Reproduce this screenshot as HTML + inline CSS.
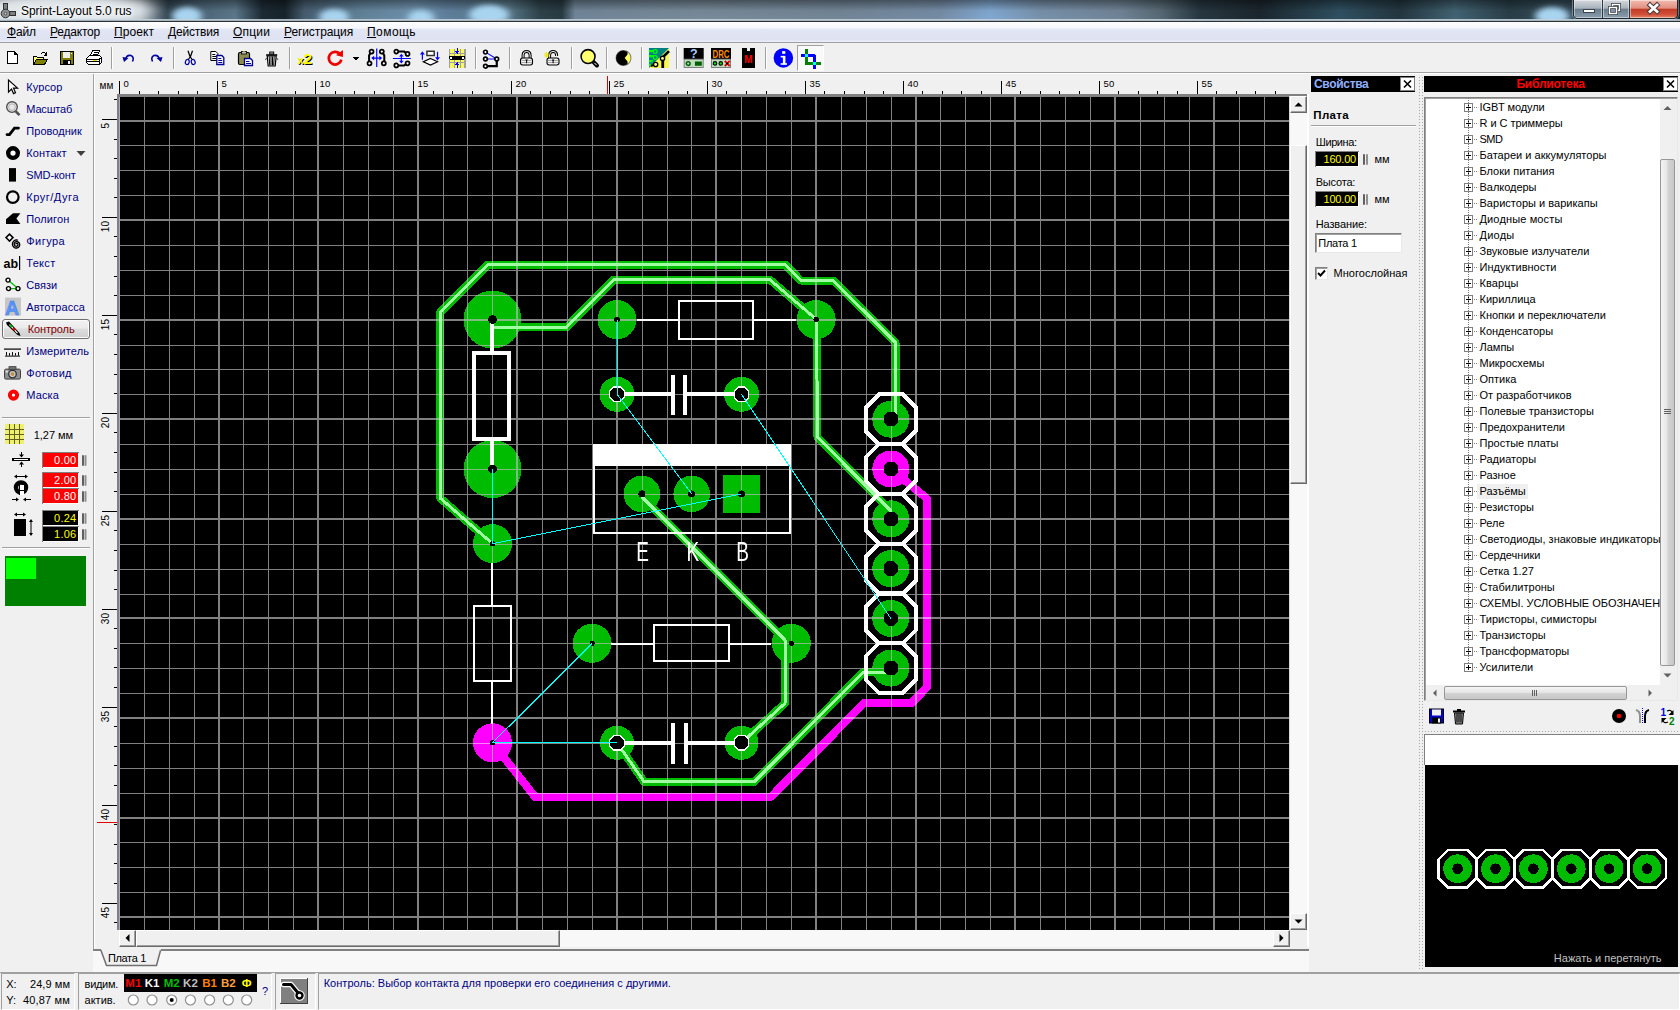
<!DOCTYPE html>
<html lang="ru"><head><meta charset="utf-8"><title>Sprint-Layout 5.0 rus</title>
<style>

html,body{margin:0;padding:0;background:#f0f0f0;}
body{width:1680px;height:1010px;overflow:hidden;font-family:"Liberation Sans",sans-serif;font-size:11px;}
#app{position:relative;width:1680px;height:1010px;overflow:hidden;background:#f0f0f0;}
.t{position:absolute;white-space:nowrap;line-height:1;}
.a{position:absolute;}
svg{position:absolute;overflow:visible;}
svg text{font-family:"Liberation Sans",sans-serif;}
u{text-decoration:underline;}

</style></head>
<body>
<div id="app">
<svg class="a" style="left:0;top:0" width="1680" height="22" viewBox="0 0 1680 22">
<defs>
<linearGradient id="tbh" x1="0" x2="1" y1="0" y2="0"><stop offset="0.0000" stop-color="#bcc6cc"/><stop offset="0.0446" stop-color="#c6cfd4"/><stop offset="0.0833" stop-color="#b4bec6"/><stop offset="0.0940" stop-color="#5c6c78"/><stop offset="0.1000" stop-color="#324550"/><stop offset="0.1190" stop-color="#4c6679"/><stop offset="0.1399" stop-color="#5d798c"/><stop offset="0.1560" stop-color="#1d2b35"/><stop offset="0.1696" stop-color="#18242b"/><stop offset="0.1815" stop-color="#485f72"/><stop offset="0.2143" stop-color="#62839a"/><stop offset="0.2470" stop-color="#7093af"/><stop offset="0.2679" stop-color="#5f809d"/><stop offset="0.3036" stop-color="#587787"/><stop offset="0.3214" stop-color="#2e434c"/><stop offset="0.3345" stop-color="#293c43"/><stop offset="0.3423" stop-color="#72879a"/><stop offset="0.4167" stop-color="#798c9b"/><stop offset="0.5000" stop-color="#748798"/><stop offset="0.5595" stop-color="#778ea8"/><stop offset="0.5893" stop-color="#83abd5"/><stop offset="0.6190" stop-color="#7993ad"/><stop offset="0.6667" stop-color="#728598"/><stop offset="0.6905" stop-color="#586b76"/><stop offset="0.7143" stop-color="#273741"/><stop offset="0.7500" stop-color="#1b272e"/><stop offset="0.7976" stop-color="#305162"/><stop offset="0.8333" stop-color="#243741"/><stop offset="0.8661" stop-color="#436474"/><stop offset="0.8988" stop-color="#293e48"/><stop offset="0.9286" stop-color="#374f5d"/><stop offset="1.0000" stop-color="#1c2a32"/></linearGradient>
<linearGradient id="tbv" x1="0" x2="0" y1="0" y2="1">
<stop offset="0" stop-color="#000" stop-opacity="0.42"/><stop offset="0.25" stop-color="#000" stop-opacity="0.24"/><stop offset="0.5" stop-color="#000" stop-opacity="0.05"/><stop offset="1" stop-color="#000" stop-opacity="0"/>
</linearGradient>
<filter id="bl" x="-50%" y="-100%" width="200%" height="300%"><feGaussianBlur stdDeviation="3.5 2.5"/></filter>
<filter id="bl2" x="-20%" y="-100%" width="140%" height="300%"><feGaussianBlur stdDeviation="9 4"/></filter>
</defs>
<rect x="0" y="0" width="1680" height="21" fill="url(#tbh)"/>
<rect x="0" y="0" width="1680" height="21" fill="url(#tbv)"/>
<g filter="url(#bl)" fill="#a8d4f0">
<ellipse cx="187" cy="16" rx="15" ry="9"/><ellipse cx="334" cy="17" rx="15" ry="8"/><ellipse cx="421" cy="18" rx="13" ry="8"/>
<ellipse cx="489" cy="15" rx="20" ry="10"/><ellipse cx="1552" cy="16" rx="17" ry="9"/>
</g>
<g filter="url(#bl2)"><ellipse cx="62" cy="10" rx="88" ry="16" fill="#e4eaee" opacity="0.95"/></g>
<rect x="0" y="19" width="1680" height="1" fill="#c8d4dc" opacity="0.85"/>
<rect x="0" y="20" width="1680" height="1" fill="#a4b2bc"/>
<rect x="0" y="21" width="1680" height="1" fill="#2c3238"/>
<!-- app icon -->
<g shape-rendering="crispEdges"><rect x="3.5" y="3.5" width="4" height="8" fill="#808080" stroke="#303030" stroke-width="1"/><rect x="9.5" y="11.5" width="6" height="4" fill="#808080" stroke="#303030" stroke-width="1"/></g>
<circle cx="5.5" cy="13.5" r="4.3" fill="#909090" stroke="#303030" stroke-width="1"/><circle cx="5.5" cy="13.5" r="1.3" fill="#d0d0d0" stroke="#404040" stroke-width=".8"/>
</svg>
<span class="t " style="left:21.0px;top:4.8px;font-size:12px;color:#000;letter-spacing:-0.04px;text-shadow:0 0 6px #fff,0 0 6px #fff,0 0 3px #fff;">Sprint-Layout 5.0 rus</span>
<div class="a" style="left:1573px;top:0;width:105px;height:19px;border:1px solid #1c2830;border-top:none;border-radius:0 0 5px 5px;box-sizing:border-box;overflow:hidden;box-shadow:0 0 0 1px rgba(255,255,255,.35)">
<div class="a" style="left:0;top:0;width:28px;height:18px;background:linear-gradient(#d4d8dc 0,#a8b2bc 45%,#6a7e8e 52%,#8c9eae 100%);border-right:1px solid #2c3840;box-shadow:inset 0 0 0 1px rgba(255,255,255,.45)"></div>
<div class="a" style="left:29px;top:0;width:26px;height:18px;background:linear-gradient(#d4d8dc 0,#a8b2bc 45%,#6a7e8e 52%,#8c9eae 100%);border-right:1px solid #2c3840;box-shadow:inset 0 0 0 1px rgba(255,255,255,.45)"></div>
<div class="a" style="left:56px;top:0;width:48px;height:18px;background:linear-gradient(#f2bcb0 0,#e29080 45%,#c23c28 52%,#d05038 80%,#e48468 100%);box-shadow:inset 0 0 0 1px rgba(255,255,255,.45)"></div>
<svg style="left:0;top:0" width="103" height="18" viewBox="0 0 103 18">
<rect x="9.500" y="9.500" width="11" height="3" fill="#fff" stroke="#3a444c"/>
<rect x="38.500" y="4.500" width="7" height="6" fill="none" stroke="#3a444c" stroke-width="3"/><rect x="38.500" y="4.500" width="7" height="6" fill="none" stroke="#fff" stroke-width="1.400"/>
<rect x="35.500" y="7.500" width="7" height="6" fill="#8294a4" stroke="#3a444c" stroke-width="3"/><rect x="35.500" y="7.500" width="7" height="6" fill="none" stroke="#fff" stroke-width="1.400"/>
<path d="M76 5 L83 11.500 M83 5 L76 11.500" stroke="#4a3a3c" stroke-width="4.800" stroke-linecap="square"/><path d="M76 5 L83 11.500 M83 5 L76 11.500" stroke="#fff" stroke-width="2.800" stroke-linecap="square"/>
</svg></div>
<div class="a" style="left:0;top:22px;width:1680px;height:20px;background:linear-gradient(#fdfdff 0,#f6f7fc 30%,#e3e6f4 36%,#dde1f1 85%,#eceef8 100%);"></div>
<div class="a" style="left:0;top:42px;width:1680px;height:1px;background:#a0a0a0"></div>
<span class="t " style="left:7.0px;top:26.0px;font-size:12px;color:#000;letter-spacing:-0.20px;"><u>Ф</u>айл</span>
<span class="t " style="left:50.0px;top:26.0px;font-size:12px;color:#000;letter-spacing:-0.21px;"><u>Р</u>едактор</span>
<span class="t " style="left:114.0px;top:26.0px;font-size:12px;color:#000;letter-spacing:0.08px;"><u>П</u>роект</span>
<span class="t " style="left:168.0px;top:26.0px;font-size:12px;color:#000;letter-spacing:-0.20px;"><u>Д</u>ействия</span>
<span class="t " style="left:233.0px;top:26.0px;font-size:12px;color:#000;letter-spacing:0.18px;"><u>О</u>пции</span>
<span class="t " style="left:284.0px;top:26.0px;font-size:12px;color:#000;letter-spacing:-0.10px;"><u>Р</u>егистрация</span>
<span class="t " style="left:367.0px;top:26.0px;font-size:12px;color:#000;letter-spacing:0.44px;"><u>П</u>омощь</span>
<div class="a" style="left:0;top:72px;width:1680px;height:1px;background:#a0a0a0"></div>
<div class="a" style="left:0;top:73px;width:1680px;height:1px;background:#fff"></div>
<div class="a" style="left:111px;top:47px;width:1px;height:22px;background:#a0a0a0"></div><div class="a" style="left:112px;top:47px;width:1px;height:22px;background:#fff"></div>
<div class="a" style="left:173px;top:47px;width:1px;height:22px;background:#a0a0a0"></div><div class="a" style="left:174px;top:47px;width:1px;height:22px;background:#fff"></div>
<div class="a" style="left:289px;top:47px;width:1px;height:22px;background:#a0a0a0"></div><div class="a" style="left:290px;top:47px;width:1px;height:22px;background:#fff"></div>
<div class="a" style="left:475px;top:47px;width:1px;height:22px;background:#a0a0a0"></div><div class="a" style="left:476px;top:47px;width:1px;height:22px;background:#fff"></div>
<div class="a" style="left:509px;top:47px;width:1px;height:22px;background:#a0a0a0"></div><div class="a" style="left:510px;top:47px;width:1px;height:22px;background:#fff"></div>
<div class="a" style="left:571px;top:47px;width:1px;height:22px;background:#a0a0a0"></div><div class="a" style="left:572px;top:47px;width:1px;height:22px;background:#fff"></div>
<div class="a" style="left:606px;top:47px;width:1px;height:22px;background:#a0a0a0"></div><div class="a" style="left:607px;top:47px;width:1px;height:22px;background:#fff"></div>
<div class="a" style="left:641px;top:47px;width:1px;height:22px;background:#a0a0a0"></div><div class="a" style="left:642px;top:47px;width:1px;height:22px;background:#fff"></div>
<div class="a" style="left:676px;top:47px;width:1px;height:22px;background:#a0a0a0"></div><div class="a" style="left:677px;top:47px;width:1px;height:22px;background:#fff"></div>
<div class="a" style="left:765px;top:47px;width:1px;height:22px;background:#a0a0a0"></div><div class="a" style="left:766px;top:47px;width:1px;height:22px;background:#fff"></div>
<div class="a" style="left:797px;top:45px;width:27px;height:26px;background:#f9f9f9;border:1px solid #a0a0a0;border-right-color:#fff;border-bottom-color:#fff;box-sizing:border-box"></div>
<svg class="a" style="left:0;top:0" width="840" height="74" viewBox="0 0 840 74" shape-rendering="crispEdges"><g transform="translate(4.5,50.0) scale(1.0)"><path d="M2.500 1.500 H9.500 L12.500 4.500 V13.500 H2.500 Z" fill="#fff" stroke="#000"/><path d="M9.500 1.500 V4.500 H12.500" fill="none" stroke="#000"/></g><g transform="translate(32.0,50.0) scale(1.0)"><path d="M1.500 14.500 V6.500 H4.500 L5.500 7.500 H11.500 V9.500" fill="#ffff80" stroke="#000"/><path d="M1.500 14.500 L4.500 9.500 H15.500 L12.500 14.500 Z" fill="#808000" stroke="#000"/><path d="M9 3.500 Q12 1 14 4.500 M14.500 2 V5 H11.500" fill="none" stroke="#000"/></g><g transform="translate(59.0,50.0) scale(1.0)"><rect x="1.500" y="1.500" width="13" height="13" fill="#808000" stroke="#000"/><rect x="4" y="2" width="7" height="6" fill="#f0f0f0"/><rect x="4" y="10" width="8" height="4" fill="#000"/><rect x="9" y="11" width="2" height="3" fill="#f0f0f0"/><rect x="12" y="3" width="1" height="1" fill="#fff"/></g><g transform="translate(86.0,50.0) scale(1.0)"><path d="M4.500 5.500 L6.500 0.500 H13.500 L11.500 5.500 Z" fill="#fff" stroke="#000"/><path d="M7.500 2.500 H11.500 M6.500 4 H10.500" stroke="#000"/><path d="M0.500 8.500 L3.500 5.500 H13.500 L15.500 7.500 V12.500 L13.500 14.500 H2.500 L0.500 12.500 Z" fill="#fff" stroke="#000"/><path d="M0.500 9.500 H13 L15.500 7.500 M13.500 9.500 V14.500 M0.500 11.500 H13.500" fill="none" stroke="#000"/><rect x="7" y="10" width="4" height="1" fill="#e8e000"/></g><g transform="translate(121.0,50.0) scale(1.0)" shape-rendering="geometricPrecision"><path d="M4.500 9 Q6 4.500 10 5.500 Q13.500 7 11.500 11.500" fill="none" stroke="#0000a0" stroke-width="1.600"/><path d="M1.500 7 L7.500 8 L3 12 Z" fill="#0000a0"/></g><g transform="translate(148.0,50.0) scale(1.0)" shape-rendering="geometricPrecision"><path d="M11.500 9 Q10 4.500 6 5.500 Q2.500 7 4.500 11.500" fill="none" stroke="#0000a0" stroke-width="1.600"/><path d="M14.500 7 L8.500 8 L13 12 Z" fill="#0000a0"/></g><g transform="translate(182.0,50.0) scale(1.0)" shape-rendering="geometricPrecision"><path d="M6 0.800 L8 6.500 L10.500 10 M10.500 0.800 L8.500 6.500 L6 10" stroke="#000" stroke-width="1.250" fill="none"/><ellipse cx="5.300" cy="12" rx="1.900" ry="2.600" fill="none" stroke="#0000a0" stroke-width="1.200" transform="rotate(15 5.300 12)"/><ellipse cx="11.200" cy="12" rx="1.900" ry="2.600" fill="none" stroke="#0000a0" stroke-width="1.200" transform="rotate(-15 11.200 12)"/></g><g transform="translate(209.3,50.0) scale(1.0)" shape-rendering="geometricPrecision"><path d="M1.500 1.500 H6.500 L8.500 3.500 V10.500 H1.500 Z" fill="#fff" stroke="#000"/><path d="M3 4.500 H6 M3 6.500 H7 M3 8.500 H7" stroke="#000"/><path d="M7.500 5.500 H12.500 L14.500 7.500 V14.500 H7.500 Z" fill="#fff" stroke="#000090" stroke-width="1.300"/><path d="M9 8.500 H12 M9 10.500 H13 M9 12.500 H13" stroke="#000090"/></g><g transform="translate(237.0,50.0) scale(1.0)" shape-rendering="geometricPrecision"><rect x="1.500" y="2.500" width="11" height="12" rx="1.500" fill="#8c8c4c" stroke="#000" stroke-width="1.200"/><rect x="4.500" y="1.500" width="5" height="2.500" fill="#c0c0c0" stroke="#000" stroke-width=".8"/><path d="M6 2 L7 1 L8 2 Z" fill="#ffff00"/><path d="M7.500 8.500 H13.500 L15.500 10.500 V15.500 H7.500 Z" fill="#fff" stroke="#000090" stroke-width="1.300"/><path d="M9 11.500 H12.500 M9 13.500 H14" stroke="#000090"/></g><g transform="translate(263.7,50.5) scale(1.0)" shape-rendering="geometricPrecision"><path d="M3.500 5.500 H12.500 L11.500 15.500 H4.500 Z" fill="#fff" stroke="#000" stroke-width="1.200"/><path d="M2.500 4.500 H13.500" stroke="#000" stroke-width="1.600"/><rect x="6" y="1.500" width="4" height="2" fill="#c0c0c0" stroke="#000" stroke-width=".9"/><path d="M5.500 6 L6 15 M7.300 6 V15 M8.800 6 V15 M10.500 6 L10 15" stroke="#000" stroke-width="1"/><path d="M1.500 9 L3 8 M14.500 9 L13 8" stroke="#000" stroke-width=".9"/></g><g shape-rendering="geometricPrecision"><text x="298.500" y="64.500" font-size="11" font-weight="bold" fill="#000">x<tspan font-size="15">2</tspan></text><text x="297.500" y="63.500" font-size="11" font-weight="bold" fill="#ffff00">x<tspan font-size="15">2</tspan></text></g><g transform="translate(326.5,49.5) scale(1.06)" shape-rendering="geometricPrecision"><path d="M12.500 4 A6 6 0 1 0 14 9.500" fill="none" stroke="#ee0000" stroke-width="2.600"/><path d="M9 5.500 L15.500 0.500 L15.500 7 Z" fill="#ee0000"/></g><path d="M352 56.500 H360 L356 60.500 Z" fill="#000"/><g transform="translate(367.3,48.6) scale(1.18)" shape-rendering="geometricPrecision"><path d="M3.600 2.500 L1.500 5.700 V10.200 L1.900 12.300 M12.300 2.500 L14.400 5.700 V10.200 L14 12.300" fill="none" stroke="#000" stroke-width="1.700"/><circle cx="3.600" cy="2.500" r="1.700" fill="#fff" stroke="#000" stroke-width="1.500"/><circle cx="12.300" cy="2.500" r="1.700" fill="#fff" stroke="#000" stroke-width="1.500"/><circle cx="1.900" cy="12.500" r="1.700" fill="#fff" stroke="#000" stroke-width="1.500"/><circle cx="14" cy="12.500" r="1.700" fill="#fff" stroke="#000" stroke-width="1.500"/><path d="M8 0 V15.500 M4.500 8 H11.500" stroke="#0000ff" stroke-width="1"/><path d="M3.400 8 l2.400-2 v4z M12.600 8 l-2.400-2 v4z" fill="#0000ff"/></g><g transform="translate(394.1,49.3) scale(1.15)" shape-rendering="geometricPrecision"><path d="M1.900 2 H8.800 L11.500 4 M1.900 14 H8.800 L11.500 12.300" fill="none" stroke="#000" stroke-width="1.700"/><circle cx="1.900" cy="2" r="1.700" fill="#fff" stroke="#000" stroke-width="1.500"/><circle cx="11.700" cy="4" r="1.700" fill="#fff" stroke="#000" stroke-width="1.500"/><circle cx="1.900" cy="14" r="1.700" fill="#fff" stroke="#000" stroke-width="1.500"/><circle cx="11.700" cy="12.200" r="1.700" fill="#fff" stroke="#000" stroke-width="1.500"/><path d="M-1 8 H14.500 M6.300 5 V11" stroke="#0000ff" stroke-width="1"/><path d="M6.300 3.800 l-2 2.400 h4z M6.300 12.400 l-2-2.400 h4z" fill="#0000ff"/></g><g transform="translate(420.2,48.2) scale(1.22)" shape-rendering="geometricPrecision"><rect x="5.500" y="2.500" width="6" height="3.500" fill="#fff" stroke="#303030" stroke-width="1.200"/><path d="M8.400 8.400 L14.200 11.100 L8.400 13.800 L2.600 11.100 Z" fill="#fff" stroke="#000" stroke-width="1"/><path d="M1.800 4 V9.500 M14.200 3 V8.500" stroke="#0000ff" stroke-width="1"/><path d="M1.800 2.600 l-2 2.600 h4z M14.200 10 l-2-2.600 h4z" fill="#0000ff"/></g><g transform="translate(448.7,48.5) scale(1.12)"><rect x="0" y="0" width="15" height="17" fill="#f8f860"/><path d="M0.500 0 V17 M5.500 0 V17 M10.500 0 V17 M14.500 0 V17 M0 4.500 H15 M0 12.500 H15" stroke="#a0a0a0" stroke-width="1"/><rect x="0" y="6.500" width="15" height="3.600" rx="1.800" fill="#000"/><circle cx="2" cy="8.300" r="1" fill="#fff"/><circle cx="13" cy="8.300" r="1" fill="#fff"/><path d="M7.500 -0.500 V3 M7.500 17.500 V14" stroke="#0000ff" stroke-width="1"/><path d="M7.500 5 l-2-2.400 h4z M7.500 12 l-2 2.400 h4z" fill="#0000ff"/></g><g transform="translate(482.9,49.7) scale(1.1)" shape-rendering="geometricPrecision"><path d="M2.300 2.200 L12.600 8.500 H2.300" fill="none" stroke="#0000ff" stroke-width="1"/><path d="M2.300 15 H12.600 V8.500" fill="none" stroke="#000" stroke-width="2"/><circle cx="2.300" cy="2.200" r="1.700" fill="#fff" stroke="#000" stroke-width="1.500"/><circle cx="2.300" cy="8.500" r="1.700" fill="#fff" stroke="#000" stroke-width="1.500"/><circle cx="2.300" cy="15" r="1.700" fill="#fff" stroke="#000" stroke-width="1.500"/><circle cx="12.600" cy="8.500" r="1.700" fill="#fff" stroke="#000" stroke-width="1.500"/></g><g transform="translate(518.5,50.0) scale(1.0)" shape-rendering="geometricPrecision"><path d="M4.600 8 V4.900 A3.500 3.500 0 0 1 11.600 4.900 V8" fill="none" stroke="#000" stroke-width="3"/><path d="M4.600 8 V4.900 A3.500 3.500 0 0 1 11.600 4.900 V8" fill="none" stroke="#f8f8f8" stroke-width="1"/><rect x="2" y="8" width="12" height="7" rx="2.200" fill="#f0f0f0" stroke="#000" stroke-width="1.100"/><path d="M3 10.500 H13 M3 12.500 H13" stroke="#a8a8a8" stroke-width="1"/><path d="M6.800 9.500 H9.400 L8.600 11 V13.200 H7.600 V11 Z" fill="#000"/></g><g transform="translate(545.0,50.0) scale(1.0)" shape-rendering="geometricPrecision"><path d="M4.600 8 V4.900 A3.500 3.500 0 0 1 11.600 4.900 V6" fill="none" stroke="#000" stroke-width="3"/><path d="M4.600 8 V4.900 A3.500 3.500 0 0 1 11.600 4.900 V6" fill="none" stroke="#f8f8f8" stroke-width="1"/><rect x="2" y="8" width="12" height="7" rx="2.200" fill="#f0f0f0" stroke="#000" stroke-width="1.100"/><path d="M3 10.500 H13 M3 12.500 H13" stroke="#a8a8a8" stroke-width="1"/><path d="M6.800 9.500 H9.400 L8.600 11 V13.200 H7.600 V11 Z" fill="#000"/><path d="M-1 5 H4 M1.500 2 V8 M-0.500 2.800 L3.500 7.200 M3.500 2.800 L-0.500 7.200" stroke="#f0e800" stroke-width="1"/></g><g transform="translate(579.9,48.4) scale(1.2)" shape-rendering="geometricPrecision"><path d="M10.800 10.800 L14.200 14.200" stroke="#000" stroke-width="3.400" stroke-linecap="round"/><path d="M12 12 L14 14" stroke="#fff" stroke-width=".8"/><circle cx="6.800" cy="6.800" r="5.800" fill="#ffff70" stroke="#000" stroke-width="1.300"/></g><g transform="translate(614.3,48.8) scale(1.15)" shape-rendering="geometricPrecision"><circle cx="8" cy="8" r="6.500" fill="#ffff60" stroke="#808080" stroke-width=".9"/><path d="M8 1.500 A6.500 6.500 0 1 0 8 14.500 L11.500 13.500 L11.500 11 L9 8 L11.500 5 L11.500 2.500 Z" fill="#000"/></g><g transform="translate(649.0,48.0) scale(1.25)" shape-rendering="geometricPrecision"><rect x="0" y="0" width="16" height="16" fill="#f8f850"/><path d="M0 0 H16 L0 16 Z" fill="#008080"/><path d="M0 2.500 H4.500 M0 6.500 H4.500 M0 10.500 H3 M0 13.500 H1.500" stroke="#00ff00" stroke-width="1.700"/><circle cx="5" cy="2.800" r="1.500" fill="#008080" stroke="#00ff00" stroke-width="1"/><circle cx="5" cy="7.500" r="1.500" fill="#008080" stroke="#00ff00" stroke-width="1"/><path d="M16 2.500 L11 7.500 V16" fill="none" stroke="#000" stroke-width="2.200"/><circle cx="10.800" cy="8.300" r="1.700" fill="#ffff80" stroke="#000" stroke-width="1.100"/><path d="M1.500 14.500 L5 13" stroke="#000" stroke-width="1.600"/><circle cx="5.300" cy="13.200" r="1.700" fill="#ffff80" stroke="#000" stroke-width="1.100"/></g><g transform="translate(683.7,48.0) scale(1.25)" shape-rendering="geometricPrecision"><rect x="0" y="0" width="16" height="9" fill="#000"/><rect x="0.400" y="9" width="15.200" height="6.600" fill="#c0dcc0" stroke="#808080" stroke-width=".8"/><circle cx="3.600" cy="12.400" r="1.500" fill="#c0dcc0" stroke="#006000" stroke-width="1.200"/><rect x="9" y="10.800" width="5.500" height="3.400" fill="#006000"/></g><text x="690" y="58" font-size="12.500" font-weight="bold" fill="#a8ccff" shape-rendering="geometricPrecision">?</text><g transform="translate(711.0,48.0) scale(1.25)" shape-rendering="geometricPrecision"><rect x="0" y="0" width="16" height="9" fill="#000"/><rect x="0.400" y="9" width="15.200" height="6.600" fill="#c0dcc0" stroke="#808080" stroke-width=".8"/><circle cx="3.200" cy="12.300" r="1.400" fill="#00e000" stroke="#000" stroke-width=".9"/><circle cx="7.800" cy="12.300" r="1.400" fill="#00e000" stroke="#000" stroke-width=".9"/><path d="M11 10.300 L15 14.500 M15 10.300 L11 14.500" stroke="#e00000" stroke-width="1.500"/><circle cx="13" cy="12.400" r=".900" fill="#000"/></g><text x="712.500" y="57.500" font-size="10" font-weight="bold" fill="#ff9000" textLength="17" lengthAdjust="spacingAndGlyphs" shape-rendering="geometricPrecision">DRC</text><path d="M742 48 H747 V50.500 H750 V48 H755 V67.500 H742 Z" fill="#000"/><text x="744.300" y="62.500" font-size="10" font-weight="bold" fill="#ff0000" shape-rendering="geometricPrecision">M</text><g transform="translate(773.6,48.2) scale(1.22)" shape-rendering="geometricPrecision"><circle cx="8" cy="8" r="8" fill="#0000ff"/><rect x="7.600" y="6.300" width="2.100" height="7" fill="#fff"/><rect x="5.800" y="6.300" width="3" height="1.300" fill="#fff"/><rect x="5.800" y="12.300" width="5.200" height="1.300" fill="#fff"/><rect x="7" y="2.400" width="2.600" height="2.200" fill="#fff"/></g><rect x="805" y="49" width="3" height="16" fill="#008000"/><rect x="805" y="62" width="16" height="3" fill="#008000"/><rect x="801" y="54" width="14" height="3" fill="#0000ff"/><rect x="813" y="55" width="3" height="14" fill="#0000ff"/><rect x="805" y="54" width="3" height="3" fill="#00ffff"/><rect x="813" y="62" width="3" height="3" fill="#00ffff"/></svg>
<div class="a" style="left:2px;top:319px;width:88px;height:20px;border:1px solid #707070;border-radius:3px;box-sizing:border-box;background:linear-gradient(#f2f2f2 0,#ebebeb 45%,#dddddd 50%,#cfcfcf 100%);box-shadow:inset 0 0 0 1px #fcfcfc"></div>
<span class="t " style="left:26.3px;top:81.7px;font-size:11px;color:#000080;letter-spacing:0.06px;">Курсор</span>
<span class="t " style="left:26.3px;top:103.7px;font-size:11px;color:#000080;letter-spacing:-0.18px;">Масштаб</span>
<span class="t " style="left:26.3px;top:125.7px;font-size:11px;color:#000080;letter-spacing:0.03px;">Проводник</span>
<span class="t " style="left:26.3px;top:147.7px;font-size:11px;color:#000080;letter-spacing:0.10px;">Контакт</span>
<span class="t " style="left:26.3px;top:169.7px;font-size:11px;color:#000080;letter-spacing:-0.12px;">SMD-конт</span>
<span class="t " style="left:26.3px;top:191.7px;font-size:11px;color:#000080;letter-spacing:0.52px;">Круг/Дуга</span>
<span class="t " style="left:26.3px;top:213.7px;font-size:11px;color:#000080;letter-spacing:0.10px;">Полигон</span>
<span class="t " style="left:26.3px;top:235.7px;font-size:11px;color:#000080;letter-spacing:0.46px;">Фигура</span>
<span class="t " style="left:26.3px;top:257.7px;font-size:11px;color:#000080;letter-spacing:0.30px;">Текст</span>
<span class="t " style="left:26.3px;top:279.7px;font-size:11px;color:#000080;letter-spacing:0.02px;">Связи</span>
<span class="t " style="left:26.3px;top:301.7px;font-size:11px;color:#000080;letter-spacing:0.06px;">Автотрасса</span>
<span class="t " style="left:27.7px;top:324.1px;font-size:11px;color:#800000;letter-spacing:-0.12px;">Контроль</span>
<span class="t " style="left:26.3px;top:345.7px;font-size:11px;color:#000080;letter-spacing:0.10px;">Измеритель</span>
<span class="t " style="left:26.3px;top:367.7px;font-size:11px;color:#000080;letter-spacing:0.26px;">Фотовид</span>
<span class="t " style="left:26.3px;top:389.7px;font-size:11px;color:#000080;letter-spacing:0.12px;">Маска</span>
<svg class="a" style="left:0;top:0" width="94" height="620" viewBox="0 0 94 620"><g transform="translate(4,78.6)"><path d="M4.500 1.500 V13.500 L7.500 10.500 L9.500 15 L11.500 14 L9.500 9.500 H13.500 Z" fill="#fff" stroke="#000" stroke-width="1.200"/></g><g transform="translate(4,100.6)"><path d="M11.500 10.500 L15.500 14.500" stroke="#505050" stroke-width="2.600"/><circle cx="8" cy="6.500" r="5.300" fill="#e8e8e8" stroke="#505050" stroke-width="1.400"/><circle cx="8" cy="6.500" r="3.300" fill="none" stroke="#b0b0b0" stroke-width="1"/></g><g transform="translate(4,122.6)"><path d="M3 12 H5.500 L10.500 5.500 H14.500" fill="none" stroke="#000" stroke-width="2.800" stroke-linecap="round"/></g><g transform="translate(4,144.6)"><circle cx="9" cy="8.500" r="4.800" fill="#fff" stroke="#000" stroke-width="4.400"/></g><g transform="translate(4,166.6)"><rect x="5" y="1.500" width="7" height="13.500" fill="#000"/></g><g transform="translate(4,188.6)"><circle cx="8.800" cy="8.500" r="5.800" fill="none" stroke="#000" stroke-width="2.200"/></g><g transform="translate(4,210.6)"><path d="M2 8.600 L9 2.600 H16.400 L12.400 7.800 L16.400 13.400 H2 Z" fill="#000"/></g><g transform="translate(5,232.6)"><path d="M4.500 1.500 L8 5 L4.500 8.500 L1 5 Z" fill="#fff" stroke="#000" stroke-width="1.500"/><path d="M10.90 11.80 L10.85 11.58 L10.88 11.33 L11.01 11.09 L11.23 10.88 L11.54 10.76 L11.90 10.74 L12.27 10.85 L12.60 11.09 L12.86 11.45 L12.99 11.90 L12.96 12.40 L12.76 12.89 L12.40 13.31 L11.90 13.60 L11.30 13.72 L10.66 13.64 L10.07 13.35 L9.57 12.86 L9.25 12.21 L9.15 11.47 L9.29 10.70 L9.69 10.00 L10.31 9.44 L11.10 9.10 L11.99 9.02 L12.88 9.24 L13.69 9.75 L14.30 10.50 L14.66 11.45 L14.70 12.48 L14.39 13.50 L13.77 14.39 L12.87 15.06 L11.78 15.41 L10.60 15.40 L9.46 15.01 L8.49 14.26 L7.78 13.21 L7.44 11.97 L7.51 10.65 L8.00 9.40 L8.88 8.35 L10.07 7.61 L11.47 7.29 L12.92 7.43" fill="none" stroke="#000" stroke-width="1.300"/></g><g transform="translate(5,276.6)"><path d="M3 3.500 L13 12 H3.500" fill="none" stroke="#00c000" stroke-width="1.300"/><circle cx="3" cy="3.500" r="2" fill="#fff" stroke="#000" stroke-width="1.400"/><circle cx="3.500" cy="12" r="2" fill="#fff" stroke="#000" stroke-width="1.400"/><circle cx="13" cy="12" r="2" fill="#fff" stroke="#000" stroke-width="1.400"/></g><g transform="translate(4,298.6)"><rect x="1" y="-1" width="16" height="18" fill="#c6c6c6"/></g><g transform="translate(5,320.6)"><path d="M1 2 L4 1 L14.500 12.500 L15.500 15.500 L12.500 14.500 L2 4.500 Z" fill="#000"/><path d="M4.500 4 L12.500 12.500" stroke="#fff" stroke-width="1.200"/><path d="M5 4.500 L7 6.500" stroke="#00c000" stroke-width="2"/><path d="M8 7.500 L10 9.800" stroke="#e00000" stroke-width="2"/></g><g transform="translate(4,342.6)"><path d="M0 6.500 H17" stroke="#000" stroke-width="1.200"/><path d="M2.500 13 V9.500 M5.500 13 V10.500 M8.500 13 V9.500 M11.500 13 V10.500 M14.500 13 V9.500 M1 13.500 H16" stroke="#000" stroke-width="1"/></g><g transform="translate(4,364.6)"><rect x="0.500" y="4.500" width="16" height="10" rx="1.500" fill="#909090" stroke="#404040"/><rect x="5" y="2" width="7" height="3" fill="#707070" stroke="#404040" stroke-width=".8"/><circle cx="8.500" cy="9.500" r="3.800" fill="#c8c8c8" stroke="#303030" stroke-width="1.300"/><circle cx="8.500" cy="9.500" r="1.800" fill="#c09040"/><rect x="1.500" y="6" width="2.500" height="2" fill="#d8d8d8"/></g><g transform="translate(5,386.6)"><circle cx="8.500" cy="8.500" r="3.600" fill="#fff" stroke="#ff0000" stroke-width="4"/></g><path d="M76.500 151 H85.500 L81 156 Z" fill="#404040"/><text x="3.500" y="267.500" font-size="12.500" font-weight="bold" fill="#000">ab</text><rect x="19" y="256" width="1.200" height="14" fill="#000"/><text x="5" y="314.500" font-size="19.500" font-weight="bold" fill="#5a98ff" stroke="#3a74e8" stroke-width=".5">A</text><rect x="2" y="417" width="88" height="1" fill="#a0a0a0"/><rect x="2" y="418" width="88" height="1" fill="#fff"/><rect x="2" y="547" width="88" height="1" fill="#a0a0a0"/><rect x="2" y="548" width="88" height="1" fill="#fff"/><g shape-rendering="crispEdges"><rect x="5" y="424" width="19" height="20" fill="#f0f070"/><path d="M9.500 424 V444 M14.500 424 V444 M19.500 424 V444 M5 429.500 H24 M5 434.500 H24 M5 439.500 H24" stroke="#606020" stroke-width="1"/></g><path d="M12 459.500 H30" stroke="#000" stroke-width="3"/><path d="M14 459.500 H28" stroke="#fff" stroke-width="1"/><path d="M21.500 452 V456 M21.500 467 V463" stroke="#000" stroke-width="1"/><path d="M21.500 457.500 l-2.500 -3 h5z M21.500 461.500 l-2.500 3 h5z" fill="#000"/><circle cx="21" cy="487.500" r="5" fill="none" stroke="#000" stroke-width="4.500"/><rect x="19" y="485" width="5" height="10" fill="#fff"/><rect x="19" y="485" width="1" height="10" fill="#000"/><rect x="19" y="490" width="5" height="1" fill="#000"/><path d="M15 476.500 H27 M12 499.500 H17 M25 499.500 H31" stroke="#000"/><path d="M14 476.500 l3-2 v4z M28 476.500 l-3-2 v4z M19 499.500 l-3-2 v4z M23 499.500 l3-2 v4z" fill="#000"/><rect x="14" y="519" width="12" height="17" fill="#000"/><path d="M15 514.500 H25 M31 521 V534" stroke="#000"/><path d="M14 514.500 l3-2 v4z M26 514.500 l-3-2 v4z M31 519 l-2 3 h4z M31 536 l-2-3 h4z" fill="#000"/><rect x="42" y="452" width="37" height="16" fill="#808080"/><rect x="43" y="453" width="36" height="15" fill="#fff"/><rect x="43" y="453" width="35" height="14" fill="#ff0000"/><rect x="82" y="455" width="2" height="11" rx="1" fill="#606060"/><rect x="84.500" y="455" width="2" height="11" rx="1" fill="#909090"/><rect x="42" y="472" width="37" height="16" fill="#808080"/><rect x="43" y="473" width="36" height="15" fill="#fff"/><rect x="43" y="473" width="35" height="14" fill="#ff0000"/><rect x="82" y="475" width="2" height="11" rx="1" fill="#606060"/><rect x="84.500" y="475" width="2" height="11" rx="1" fill="#909090"/><rect x="42" y="488" width="37" height="16" fill="#808080"/><rect x="43" y="489" width="36" height="15" fill="#fff"/><rect x="43" y="489" width="35" height="14" fill="#ff0000"/><rect x="82" y="491" width="2" height="11" rx="1" fill="#606060"/><rect x="84.500" y="491" width="2" height="11" rx="1" fill="#909090"/><rect x="42" y="510" width="37" height="16" fill="#808080"/><rect x="43" y="511" width="36" height="15" fill="#fff"/><rect x="43" y="511" width="35" height="14" fill="#000"/><rect x="82" y="513" width="2" height="11" rx="1" fill="#606060"/><rect x="84.500" y="513" width="2" height="11" rx="1" fill="#909090"/><rect x="42" y="526" width="37" height="16" fill="#808080"/><rect x="43" y="527" width="36" height="15" fill="#fff"/><rect x="43" y="527" width="35" height="14" fill="#000"/><rect x="82" y="529" width="2" height="11" rx="1" fill="#606060"/><rect x="84.500" y="529" width="2" height="11" rx="1" fill="#909090"/><g shape-rendering="crispEdges"><rect x="5" y="556" width="81" height="50" fill="#008000"/><rect x="6" y="558" width="30" height="21" fill="#00ff00"/></g></svg>
<span class="t " style="left:33.8px;top:429.5px;font-size:11px;color:#000;letter-spacing:-0.06px;">1,27 мм</span>
<span class="t " style="left:54.0px;top:454.7px;font-size:11px;color:#fff;letter-spacing:0.27px;">0.00</span>
<span class="t " style="left:54.0px;top:474.7px;font-size:11px;color:#fff;letter-spacing:0.27px;">2.00</span>
<span class="t " style="left:54.0px;top:490.7px;font-size:11px;color:#fff;letter-spacing:0.27px;">0.80</span>
<span class="t " style="left:54.0px;top:512.7px;font-size:11px;color:#ffff00;letter-spacing:0.27px;">0.24</span>
<span class="t " style="left:54.0px;top:528.7px;font-size:11px;color:#ffff00;letter-spacing:0.27px;">1.06</span>
<svg class="a" style="left:0;top:0" width="1680" height="1010" viewBox="0 0 1680 1010" shape-rendering="crispEdges"><defs><clipPath id="cv"><rect x="120" y="97" width="1169" height="833"/></clipPath></defs><rect x="117.0" y="94.0" width="1172.0" height="836.0" fill="#808080" /><rect x="119.0" y="97.0" width="1.0" height="833.0" fill="#a8a8c8" /><rect x="120.0" y="97.0" width="1169.0" height="833.0" fill="#000" /><g clip-path="url(#cv)"><circle cx="492.5" cy="319.6" r="29" fill="#00bc00" /><circle cx="492.5" cy="469.0" r="29" fill="#00bc00" /><circle cx="492.5" cy="543.7" r="19.5" fill="#00bc00" /><circle cx="492.5" cy="742.8" r="19.5" fill="#ff00ff" /><circle cx="617.0" cy="319.6" r="19.5" fill="#00bc00" /><circle cx="816.2" cy="319.6" r="19.5" fill="#00bc00" /><circle cx="617.0" cy="394.3" r="17.5" fill="#00bc00" /><circle cx="741.5" cy="394.3" r="17.5" fill="#00bc00" /><circle cx="641.9" cy="493.9" r="18.3" fill="#00bc00" /><circle cx="691.7" cy="493.9" r="18.3" fill="#00bc00" /><circle cx="592.1" cy="643.3" r="19.5" fill="#00bc00" /><circle cx="791.3" cy="643.3" r="19.5" fill="#00bc00" /><circle cx="617.0" cy="742.8" r="17" fill="#00bc00" /><circle cx="741.5" cy="742.8" r="17" fill="#00bc00" /><circle cx="890.8" cy="419.2" r="18.5" fill="#00bc00" /><circle cx="890.8" cy="469.0" r="18.5" fill="#ff00ff" /><circle cx="890.8" cy="518.8" r="18.5" fill="#00bc00" /><circle cx="890.8" cy="568.6" r="18.5" fill="#00bc00" /><circle cx="890.8" cy="618.4" r="18.5" fill="#00bc00" /><circle cx="890.8" cy="668.1" r="18.5" fill="#00bc00" /><rect x="723.0" y="475.2" width="37.0" height="37.7" fill="#00bc00" /><polyline points="492.5,543.7 440.4,498.3 440.4,312.0 488.0,264.5 785.0,264.5 800.8,280.5 833.3,280.5 895.5,342.5 895.5,415.5" fill="none" stroke="#00bc00" stroke-width="8" stroke-linejoin="round" stroke-linecap="round" /><polyline points="492.5,327.2 566.5,327.2 613.6,279.8 770.0,279.8 816.5,319.6 817.5,437.3 890.3,510.3 890.8,518.8" fill="none" stroke="#00bc00" stroke-width="8" stroke-linejoin="round" stroke-linecap="round" /><polyline points="641.9,493.9 641.9,496.9 785.0,640.0 785.0,703.3 741.5,742.8" fill="none" stroke="#00bc00" stroke-width="8" stroke-linejoin="round" stroke-linecap="round" /><polyline points="617.0,742.8 644.2,781.9 754.2,781.9 863.5,672.0 890.8,672.0" fill="none" stroke="#00bc00" stroke-width="8" stroke-linejoin="round" stroke-linecap="round" /><polyline points="890.8,469.0 926.7,498.3 926.7,687.5 911.7,703.0 864.2,703.0 770.8,796.9 535.0,796.9 492.5,742.8" fill="none" stroke="#ff00ff" stroke-width="8" stroke-linejoin="round" stroke-linecap="round" /><polyline points="492.5,543.7 440.4,498.3 440.4,312.0 488.0,264.5 785.0,264.5 800.8,280.5 833.3,280.5 895.5,342.5 895.5,415.5" fill="none" stroke="#a0ffa0" stroke-width="3" stroke-linejoin="round" stroke-linecap="round" stroke-linecap="butt"/><polyline points="492.5,327.2 566.5,327.2 613.6,279.8 770.0,279.8 816.5,319.6 817.5,437.3 890.3,510.3 890.8,518.8" fill="none" stroke="#a0ffa0" stroke-width="3" stroke-linejoin="round" stroke-linecap="round" stroke-linecap="butt"/><polyline points="641.9,493.9 641.9,496.9 785.0,640.0 785.0,703.3 741.5,742.8" fill="none" stroke="#a0ffa0" stroke-width="3" stroke-linejoin="round" stroke-linecap="round" stroke-linecap="butt"/><polyline points="617.0,742.8 644.2,781.9 754.2,781.9 863.5,672.0 890.8,672.0" fill="none" stroke="#a0ffa0" stroke-width="3" stroke-linejoin="round" stroke-linecap="round" stroke-linecap="butt"/><rect x="474.3" y="353.4" width="34.6" height="85.9" fill="none" stroke="#fff" stroke-width="4"/><rect x="490.3" y="319.7" width="4.0" height="32.0" fill="#fff" /><rect x="490.3" y="441.0" width="4.0" height="28.0" fill="#fff" /><rect x="679.3" y="301.3" width="73.5" height="37.4" fill="none" stroke="#fff" stroke-width="2"/><rect x="637.0" y="319.3" width="42.0" height="2.0" fill="#fff" /><rect x="753.8" y="319.3" width="42.5" height="2.0" fill="#fff" /><rect x="671.0" y="375.0" width="4.0" height="40.0" fill="#fff" /><rect x="683.3" y="375.0" width="4.0" height="40.0" fill="#fff" /><rect x="622.0" y="392.3" width="49.0" height="4.0" fill="#fff" /><rect x="687.0" y="392.3" width="48.0" height="4.0" fill="#fff" /><rect x="593.8" y="444.8" width="196.5" height="87.9" fill="none" stroke="#fff" stroke-width="2"/><rect x="593.0" y="444.0" width="198.0" height="21.8" fill="#fff" /><rect x="474.3" y="606" width="36.4" height="74.7" fill="none" stroke="#fff" stroke-width="2"/><rect x="491.0" y="563.0" width="2.0" height="42.0" fill="#fff" /><rect x="491.0" y="681.7" width="2.0" height="42.5" fill="#fff" /><rect x="654.3" y="625.2" width="74.4" height="35.8" fill="none" stroke="#fff" stroke-width="2"/><rect x="611.3" y="642.8" width="42.0" height="2.0" fill="#fff" /><rect x="729.7" y="642.8" width="41.5" height="2.0" fill="#fff" /><rect x="671.2" y="723.0" width="4.0" height="40.7" fill="#fff" /><rect x="684.3" y="723.0" width="4.0" height="40.7" fill="#fff" /><rect x="622.0" y="741.0" width="49.0" height="4.0" fill="#fff" /><rect x="688.0" y="741.0" width="48.0" height="4.0" fill="#fff" /><polygon points="879.0,394.2 902.6,394.2 915.8,407.4 915.8,431.0 902.6,444.2 879.0,444.2 865.8,431.0 865.8,407.4" fill="none" stroke="#fff" stroke-width="4" stroke-linejoin="miter"/><polygon points="879.0,444.0 902.6,444.0 915.8,457.2 915.8,480.8 902.6,494.0 879.0,494.0 865.8,480.8 865.8,457.2" fill="none" stroke="#fff" stroke-width="4" stroke-linejoin="miter"/><polygon points="879.0,493.8 902.6,493.8 915.8,507.0 915.8,530.6 902.6,543.8 879.0,543.8 865.8,530.6 865.8,507.0" fill="none" stroke="#fff" stroke-width="4" stroke-linejoin="miter"/><polygon points="879.0,543.6 902.6,543.6 915.8,556.8 915.8,580.4 902.6,593.6 879.0,593.6 865.8,580.4 865.8,556.8" fill="none" stroke="#fff" stroke-width="4" stroke-linejoin="miter"/><polygon points="879.0,593.4 902.6,593.4 915.8,606.6 915.8,630.2 902.6,643.4 879.0,643.4 865.8,630.2 865.8,606.6" fill="none" stroke="#fff" stroke-width="4" stroke-linejoin="miter"/><polygon points="879.0,643.1 902.6,643.1 915.8,656.3 915.8,679.9 902.6,693.1 879.0,693.1 865.8,679.9 865.8,656.3" fill="none" stroke="#fff" stroke-width="4" stroke-linejoin="miter"/><text transform="translate(636.3,561) scale(0.68,1)" font-size="28" fill="#fff" shape-rendering="auto">E</text><text transform="translate(686.5,561) scale(0.68,1)" font-size="28" fill="#fff" shape-rendering="auto">K</text><text transform="translate(736.3,561) scale(0.68,1)" font-size="28" fill="#fff" shape-rendering="auto">B</text><g style="mix-blend-mode:lighten"><rect x="144.0" y="97.0" width="1.0" height="833.0" fill="#808080" /><rect x="169.0" y="97.0" width="1.0" height="833.0" fill="#808080" /><rect x="194.0" y="97.0" width="1.0" height="833.0" fill="#808080" /><rect x="218.0" y="97.0" width="2.0" height="833.0" fill="#808080" /><rect x="243.0" y="97.0" width="1.0" height="833.0" fill="#808080" /><rect x="268.0" y="97.0" width="1.0" height="833.0" fill="#808080" /><rect x="293.0" y="97.0" width="1.0" height="833.0" fill="#808080" /><rect x="317.0" y="97.0" width="2.0" height="833.0" fill="#808080" /><rect x="343.0" y="97.0" width="1.0" height="833.0" fill="#808080" /><rect x="368.0" y="97.0" width="1.0" height="833.0" fill="#808080" /><rect x="393.0" y="97.0" width="1.0" height="833.0" fill="#808080" /><rect x="417.0" y="97.0" width="2.0" height="833.0" fill="#808080" /><rect x="443.0" y="97.0" width="1.0" height="833.0" fill="#808080" /><rect x="467.0" y="97.0" width="1.0" height="833.0" fill="#808080" /><rect x="492.0" y="97.0" width="1.0" height="833.0" fill="#808080" /><rect x="516.0" y="97.0" width="2.0" height="833.0" fill="#808080" /><rect x="542.0" y="97.0" width="1.0" height="833.0" fill="#808080" /><rect x="567.0" y="97.0" width="1.0" height="833.0" fill="#808080" /><rect x="592.0" y="97.0" width="1.0" height="833.0" fill="#808080" /><rect x="616.0" y="97.0" width="2.0" height="833.0" fill="#808080" /><rect x="642.0" y="97.0" width="1.0" height="833.0" fill="#808080" /><rect x="667.0" y="97.0" width="1.0" height="833.0" fill="#808080" /><rect x="691.0" y="97.0" width="1.0" height="833.0" fill="#808080" /><rect x="715.0" y="97.0" width="2.0" height="833.0" fill="#808080" /><rect x="741.0" y="97.0" width="1.0" height="833.0" fill="#808080" /><rect x="766.0" y="97.0" width="1.0" height="833.0" fill="#808080" /><rect x="791.0" y="97.0" width="1.0" height="833.0" fill="#808080" /><rect x="815.0" y="97.0" width="2.0" height="833.0" fill="#808080" /><rect x="841.0" y="97.0" width="1.0" height="833.0" fill="#808080" /><rect x="866.0" y="97.0" width="1.0" height="833.0" fill="#808080" /><rect x="891.0" y="97.0" width="1.0" height="833.0" fill="#808080" /><rect x="915.0" y="97.0" width="2.0" height="833.0" fill="#808080" /><rect x="940.0" y="97.0" width="1.0" height="833.0" fill="#808080" /><rect x="965.0" y="97.0" width="1.0" height="833.0" fill="#808080" /><rect x="990.0" y="97.0" width="1.0" height="833.0" fill="#808080" /><rect x="1014.0" y="97.0" width="2.0" height="833.0" fill="#808080" /><rect x="1040.0" y="97.0" width="1.0" height="833.0" fill="#808080" /><rect x="1065.0" y="97.0" width="1.0" height="833.0" fill="#808080" /><rect x="1090.0" y="97.0" width="1.0" height="833.0" fill="#808080" /><rect x="1114.0" y="97.0" width="2.0" height="833.0" fill="#808080" /><rect x="1140.0" y="97.0" width="1.0" height="833.0" fill="#808080" /><rect x="1164.0" y="97.0" width="1.0" height="833.0" fill="#808080" /><rect x="1189.0" y="97.0" width="1.0" height="833.0" fill="#808080" /><rect x="1213.0" y="97.0" width="2.0" height="833.0" fill="#808080" /><rect x="1239.0" y="97.0" width="1.0" height="833.0" fill="#808080" /><rect x="1264.0" y="97.0" width="1.0" height="833.0" fill="#808080" /><rect x="120.0" y="120.0" width="1169.0" height="2.0" fill="#808080" /><rect x="120.0" y="145.0" width="1169.0" height="1.0" fill="#808080" /><rect x="120.0" y="170.0" width="1169.0" height="1.0" fill="#808080" /><rect x="120.0" y="195.0" width="1169.0" height="1.0" fill="#808080" /><rect x="120.0" y="219.0" width="1169.0" height="2.0" fill="#808080" /><rect x="120.0" y="245.0" width="1169.0" height="1.0" fill="#808080" /><rect x="120.0" y="270.0" width="1169.0" height="1.0" fill="#808080" /><rect x="120.0" y="295.0" width="1169.0" height="1.0" fill="#808080" /><rect x="120.0" y="319.0" width="1169.0" height="2.0" fill="#808080" /><rect x="120.0" y="345.0" width="1169.0" height="1.0" fill="#808080" /><rect x="120.0" y="369.0" width="1169.0" height="1.0" fill="#808080" /><rect x="120.0" y="394.0" width="1169.0" height="1.0" fill="#808080" /><rect x="120.0" y="418.0" width="1169.0" height="2.0" fill="#808080" /><rect x="120.0" y="444.0" width="1169.0" height="1.0" fill="#808080" /><rect x="120.0" y="469.0" width="1169.0" height="1.0" fill="#808080" /><rect x="120.0" y="494.0" width="1169.0" height="1.0" fill="#808080" /><rect x="120.0" y="518.0" width="1169.0" height="2.0" fill="#808080" /><rect x="120.0" y="544.0" width="1169.0" height="1.0" fill="#808080" /><rect x="120.0" y="569.0" width="1169.0" height="1.0" fill="#808080" /><rect x="120.0" y="594.0" width="1169.0" height="1.0" fill="#808080" /><rect x="120.0" y="617.0" width="1169.0" height="2.0" fill="#808080" /><rect x="120.0" y="643.0" width="1169.0" height="1.0" fill="#808080" /><rect x="120.0" y="668.0" width="1169.0" height="1.0" fill="#808080" /><rect x="120.0" y="693.0" width="1169.0" height="1.0" fill="#808080" /><rect x="120.0" y="717.0" width="1169.0" height="2.0" fill="#808080" /><rect x="120.0" y="743.0" width="1169.0" height="1.0" fill="#808080" /><rect x="120.0" y="768.0" width="1169.0" height="1.0" fill="#808080" /><rect x="120.0" y="793.0" width="1169.0" height="1.0" fill="#808080" /><rect x="120.0" y="817.0" width="1169.0" height="2.0" fill="#808080" /><rect x="120.0" y="842.0" width="1169.0" height="1.0" fill="#808080" /><rect x="120.0" y="867.0" width="1169.0" height="1.0" fill="#808080" /><rect x="120.0" y="892.0" width="1169.0" height="1.0" fill="#808080" /><rect x="120.0" y="916.0" width="1169.0" height="2.0" fill="#808080" /></g><circle cx="492.5" cy="319.6" r="4.4" fill="#000" /><circle cx="492.5" cy="469.0" r="4.4" fill="#000" /><circle cx="492.5" cy="543.7" r="2.6" fill="#000" /><circle cx="492.5" cy="742.8" r="2.6" fill="#000" /><circle cx="617.0" cy="319.6" r="2.8" fill="#000" /><circle cx="816.2" cy="319.6" r="2.8" fill="#000" /><circle cx="641.9" cy="493.9" r="3.5" fill="#000" /><circle cx="691.7" cy="493.9" r="3.5" fill="#000" /><circle cx="741.5" cy="493.9" r="3.5" fill="#000" /><circle cx="592.1" cy="643.3" r="2.6" fill="#000" /><circle cx="791.3" cy="643.3" r="2.6" fill="#000" /><polygon points="887.6,412.0 894.0,412.0 898.0,416.0 898.0,422.4 894.0,426.4 887.6,426.4 883.6,422.4 883.6,416.0" fill="#000"/><polygon points="887.6,461.8 894.0,461.8 898.0,465.8 898.0,472.2 894.0,476.2 887.6,476.2 883.6,472.2 883.6,465.8" fill="#000"/><polygon points="887.6,511.6 894.0,511.6 898.0,515.6 898.0,522.0 894.0,526.0 887.6,526.0 883.6,522.0 883.6,515.6" fill="#000"/><polygon points="887.6,561.4 894.0,561.4 898.0,565.4 898.0,571.8 894.0,575.8 887.6,575.8 883.6,571.8 883.6,565.4" fill="#000"/><polygon points="887.6,611.2 894.0,611.2 898.0,615.2 898.0,621.6 894.0,625.6 887.6,625.6 883.6,621.6 883.6,615.2" fill="#000"/><polygon points="887.6,660.9 894.0,660.9 898.0,664.9 898.0,671.3 894.0,675.3 887.6,675.3 883.6,671.3 883.6,664.9" fill="#000"/><polygon points="613.8,387.1 620.2,387.1 624.2,391.1 624.2,397.5 620.2,401.5 613.8,401.5 609.8,397.5 609.8,391.1" fill="#000" stroke="#fff" stroke-width="1.3"/><polygon points="738.3,387.1 744.7,387.1 748.7,391.1 748.7,397.5 744.7,401.5 738.3,401.5 734.3,397.5 734.3,391.1" fill="#000" stroke="#fff" stroke-width="1.3"/><polygon points="613.8,735.6 620.2,735.6 624.2,739.6 624.2,746.0 620.2,750.0 613.8,750.0 609.8,746.0 609.8,739.6" fill="#000" stroke="#fff" stroke-width="1.3"/><polygon points="738.3,735.6 744.7,735.6 748.7,739.6 748.7,746.0 744.7,750.0 738.3,750.0 734.3,746.0 734.3,739.6" fill="#000" stroke="#fff" stroke-width="1.3"/><line x1="617.0" y1="319.6" x2="617.0" y2="394.3" stroke="#00ffff" stroke-width="1"/><line x1="617.0" y1="394.3" x2="691.7" y2="493.9" stroke="#00ffff" stroke-width="1"/><line x1="741.5" y1="394.3" x2="890.8" y2="618.4" stroke="#00ffff" stroke-width="1"/><line x1="741.5" y1="493.9" x2="492.5" y2="543.7" stroke="#00ffff" stroke-width="1"/><line x1="492.5" y1="469.0" x2="492.5" y2="543.7" stroke="#00ffff" stroke-width="1"/><line x1="592.1" y1="643.3" x2="492.5" y2="742.8" stroke="#00ffff" stroke-width="1"/><line x1="492.5" y1="742.8" x2="617.0" y2="742.8" stroke="#00ffff" stroke-width="1"/></g><rect x="119.0" y="81.0" width="1.0" height="13.0" fill="#000" /><rect x="139.0" y="91.0" width="1.0" height="3.0" fill="#000" /><rect x="158.0" y="91.0" width="1.0" height="3.0" fill="#000" /><rect x="178.0" y="91.0" width="1.0" height="3.0" fill="#000" /><rect x="197.0" y="91.0" width="1.0" height="3.0" fill="#000" /><rect x="217.0" y="81.0" width="1.0" height="13.0" fill="#000" /><rect x="237.0" y="91.0" width="1.0" height="3.0" fill="#000" /><rect x="256.0" y="91.0" width="1.0" height="3.0" fill="#000" /><rect x="276.0" y="91.0" width="1.0" height="3.0" fill="#000" /><rect x="295.0" y="91.0" width="1.0" height="3.0" fill="#000" /><rect x="315.0" y="81.0" width="1.0" height="13.0" fill="#000" /><rect x="335.0" y="91.0" width="1.0" height="3.0" fill="#000" /><rect x="354.0" y="91.0" width="1.0" height="3.0" fill="#000" /><rect x="374.0" y="91.0" width="1.0" height="3.0" fill="#000" /><rect x="393.0" y="91.0" width="1.0" height="3.0" fill="#000" /><rect x="413.0" y="81.0" width="1.0" height="13.0" fill="#000" /><rect x="433.0" y="91.0" width="1.0" height="3.0" fill="#000" /><rect x="452.0" y="91.0" width="1.0" height="3.0" fill="#000" /><rect x="472.0" y="91.0" width="1.0" height="3.0" fill="#000" /><rect x="491.0" y="91.0" width="1.0" height="3.0" fill="#000" /><rect x="511.0" y="81.0" width="1.0" height="13.0" fill="#000" /><rect x="530.0" y="91.0" width="1.0" height="3.0" fill="#000" /><rect x="550.0" y="91.0" width="1.0" height="3.0" fill="#000" /><rect x="570.0" y="91.0" width="1.0" height="3.0" fill="#000" /><rect x="589.0" y="91.0" width="1.0" height="3.0" fill="#000" /><rect x="609.0" y="81.0" width="1.0" height="13.0" fill="#000" /><rect x="628.0" y="91.0" width="1.0" height="3.0" fill="#000" /><rect x="648.0" y="91.0" width="1.0" height="3.0" fill="#000" /><rect x="668.0" y="91.0" width="1.0" height="3.0" fill="#000" /><rect x="687.0" y="91.0" width="1.0" height="3.0" fill="#000" /><rect x="707.0" y="81.0" width="1.0" height="13.0" fill="#000" /><rect x="726.0" y="91.0" width="1.0" height="3.0" fill="#000" /><rect x="746.0" y="91.0" width="1.0" height="3.0" fill="#000" /><rect x="766.0" y="91.0" width="1.0" height="3.0" fill="#000" /><rect x="785.0" y="91.0" width="1.0" height="3.0" fill="#000" /><rect x="805.0" y="81.0" width="1.0" height="13.0" fill="#000" /><rect x="824.0" y="91.0" width="1.0" height="3.0" fill="#000" /><rect x="844.0" y="91.0" width="1.0" height="3.0" fill="#000" /><rect x="864.0" y="91.0" width="1.0" height="3.0" fill="#000" /><rect x="883.0" y="91.0" width="1.0" height="3.0" fill="#000" /><rect x="903.0" y="81.0" width="1.0" height="13.0" fill="#000" /><rect x="922.0" y="91.0" width="1.0" height="3.0" fill="#000" /><rect x="942.0" y="91.0" width="1.0" height="3.0" fill="#000" /><rect x="961.0" y="91.0" width="1.0" height="3.0" fill="#000" /><rect x="981.0" y="91.0" width="1.0" height="3.0" fill="#000" /><rect x="1001.0" y="81.0" width="1.0" height="13.0" fill="#000" /><rect x="1020.0" y="91.0" width="1.0" height="3.0" fill="#000" /><rect x="1040.0" y="91.0" width="1.0" height="3.0" fill="#000" /><rect x="1059.0" y="91.0" width="1.0" height="3.0" fill="#000" /><rect x="1079.0" y="91.0" width="1.0" height="3.0" fill="#000" /><rect x="1099.0" y="81.0" width="1.0" height="13.0" fill="#000" /><rect x="1118.0" y="91.0" width="1.0" height="3.0" fill="#000" /><rect x="1138.0" y="91.0" width="1.0" height="3.0" fill="#000" /><rect x="1157.0" y="91.0" width="1.0" height="3.0" fill="#000" /><rect x="1177.0" y="91.0" width="1.0" height="3.0" fill="#000" /><rect x="1197.0" y="81.0" width="1.0" height="13.0" fill="#000" /><rect x="1216.0" y="91.0" width="1.0" height="3.0" fill="#000" /><rect x="1236.0" y="91.0" width="1.0" height="3.0" fill="#000" /><rect x="1255.0" y="91.0" width="1.0" height="3.0" fill="#000" /><rect x="1275.0" y="91.0" width="1.0" height="3.0" fill="#000" /><rect x="114.0" y="99.0" width="3.0" height="1.0" fill="#000" /><rect x="102.0" y="119.0" width="15.0" height="1.0" fill="#000" /><rect x="114.0" y="139.0" width="3.0" height="1.0" fill="#000" /><rect x="114.0" y="158.0" width="3.0" height="1.0" fill="#000" /><rect x="114.0" y="178.0" width="3.0" height="1.0" fill="#000" /><rect x="114.0" y="197.0" width="3.0" height="1.0" fill="#000" /><rect x="102.0" y="217.0" width="15.0" height="1.0" fill="#000" /><rect x="114.0" y="236.0" width="3.0" height="1.0" fill="#000" /><rect x="114.0" y="256.0" width="3.0" height="1.0" fill="#000" /><rect x="114.0" y="276.0" width="3.0" height="1.0" fill="#000" /><rect x="114.0" y="295.0" width="3.0" height="1.0" fill="#000" /><rect x="102.0" y="315.0" width="15.0" height="1.0" fill="#000" /><rect x="114.0" y="334.0" width="3.0" height="1.0" fill="#000" /><rect x="114.0" y="354.0" width="3.0" height="1.0" fill="#000" /><rect x="114.0" y="374.0" width="3.0" height="1.0" fill="#000" /><rect x="114.0" y="393.0" width="3.0" height="1.0" fill="#000" /><rect x="102.0" y="413.0" width="15.0" height="1.0" fill="#000" /><rect x="114.0" y="432.0" width="3.0" height="1.0" fill="#000" /><rect x="114.0" y="452.0" width="3.0" height="1.0" fill="#000" /><rect x="114.0" y="472.0" width="3.0" height="1.0" fill="#000" /><rect x="114.0" y="491.0" width="3.0" height="1.0" fill="#000" /><rect x="102.0" y="511.0" width="15.0" height="1.0" fill="#000" /><rect x="114.0" y="530.0" width="3.0" height="1.0" fill="#000" /><rect x="114.0" y="550.0" width="3.0" height="1.0" fill="#000" /><rect x="114.0" y="570.0" width="3.0" height="1.0" fill="#000" /><rect x="114.0" y="589.0" width="3.0" height="1.0" fill="#000" /><rect x="102.0" y="609.0" width="15.0" height="1.0" fill="#000" /><rect x="114.0" y="628.0" width="3.0" height="1.0" fill="#000" /><rect x="114.0" y="648.0" width="3.0" height="1.0" fill="#000" /><rect x="114.0" y="667.0" width="3.0" height="1.0" fill="#000" /><rect x="114.0" y="687.0" width="3.0" height="1.0" fill="#000" /><rect x="102.0" y="707.0" width="15.0" height="1.0" fill="#000" /><rect x="114.0" y="726.0" width="3.0" height="1.0" fill="#000" /><rect x="114.0" y="746.0" width="3.0" height="1.0" fill="#000" /><rect x="114.0" y="765.0" width="3.0" height="1.0" fill="#000" /><rect x="114.0" y="785.0" width="3.0" height="1.0" fill="#000" /><rect x="102.0" y="805.0" width="15.0" height="1.0" fill="#000" /><rect x="114.0" y="824.0" width="3.0" height="1.0" fill="#000" /><rect x="114.0" y="844.0" width="3.0" height="1.0" fill="#000" /><rect x="114.0" y="863.0" width="3.0" height="1.0" fill="#000" /><rect x="114.0" y="883.0" width="3.0" height="1.0" fill="#000" /><rect x="102.0" y="903.0" width="15.0" height="1.0" fill="#000" /><rect x="114.0" y="922.0" width="3.0" height="1.0" fill="#000" /><rect x="607.0" y="76.0" width="1.0" height="18.0" fill="#e00000" /><rect x="97.0" y="822.0" width="20.0" height="1.0" fill="#e00000" /><text x="123.6" y="87.3" font-size="9.5" fill="#000" shape-rendering="auto">0</text><text x="221.6" y="87.3" font-size="9.5" fill="#000" shape-rendering="auto">5</text><text x="319.6" y="87.3" font-size="9.5" fill="#000" shape-rendering="auto">10</text><text x="417.6" y="87.3" font-size="9.5" fill="#000" shape-rendering="auto">15</text><text x="515.6" y="87.3" font-size="9.5" fill="#000" shape-rendering="auto">20</text><text x="613.6" y="87.3" font-size="9.5" fill="#000" shape-rendering="auto">25</text><text x="711.6" y="87.3" font-size="9.5" fill="#000" shape-rendering="auto">30</text><text x="809.6" y="87.3" font-size="9.5" fill="#000" shape-rendering="auto">35</text><text x="907.6" y="87.3" font-size="9.5" fill="#000" shape-rendering="auto">40</text><text x="1005.6" y="87.3" font-size="9.5" fill="#000" shape-rendering="auto">45</text><text x="1103.6" y="87.3" font-size="9.5" fill="#000" shape-rendering="auto">50</text><text x="1201.6" y="87.3" font-size="9.5" fill="#000" shape-rendering="auto">55</text><text transform="translate(109,123) rotate(-90)" text-anchor="end" font-size="10" fill="#000" shape-rendering="auto">5</text><text transform="translate(109,221) rotate(-90)" text-anchor="end" font-size="10" fill="#000" shape-rendering="auto">10</text><text transform="translate(109,319) rotate(-90)" text-anchor="end" font-size="10" fill="#000" shape-rendering="auto">15</text><text transform="translate(109,417) rotate(-90)" text-anchor="end" font-size="10" fill="#000" shape-rendering="auto">20</text><text transform="translate(109,515) rotate(-90)" text-anchor="end" font-size="10" fill="#000" shape-rendering="auto">25</text><text transform="translate(109,613) rotate(-90)" text-anchor="end" font-size="10" fill="#000" shape-rendering="auto">30</text><text transform="translate(109,711) rotate(-90)" text-anchor="end" font-size="10" fill="#000" shape-rendering="auto">35</text><text transform="translate(109,809) rotate(-90)" text-anchor="end" font-size="10" fill="#000" shape-rendering="auto">40</text><text transform="translate(109,907) rotate(-90)" text-anchor="end" font-size="10" fill="#000" shape-rendering="auto">45</text><text x="99.5" y="89" font-size="10" fill="#000" shape-rendering="auto">мм</text></svg>
<div class="a" style="left:93px;top:74px;width:1px;height:876px;background:#a0a0a0"></div>
<div class="a" style="left:94px;top:74px;width:1px;height:876px;background:#fff"></div>
<div class="a" style="left:1289px;top:94px;width:19px;height:2px;background:#808080"></div><div class="a" style="left:1289px;top:96px;width:1px;height:834px;background:#d8d8d8"></div><div class="a" style="left:1290px;top:96px;width:17px;height:834px;background:#f8f8f8;"></div>
<div class="a" style="left:1290px;top:96px;width:17px;height:17px;box-sizing:border-box;background:#f0f0f0;border:1px solid;border-color:#fff #696969 #696969 #fff;box-shadow:inset -1px -1px 0 #a0a0a0;"></div>
<div class="a" style="left:1290px;top:913px;width:17px;height:17px;box-sizing:border-box;background:#f0f0f0;border:1px solid;border-color:#fff #696969 #696969 #fff;box-shadow:inset -1px -1px 0 #a0a0a0;"></div>
<div class="a" style="left:1290px;top:145px;width:17px;height:339px;box-sizing:border-box;background:#f0f0f0;border:1px solid;border-color:#fff #696969 #696969 #fff;box-shadow:inset -1px -1px 0 #a0a0a0;"></div>
<div class="a" style="left:119px;top:930px;width:1171px;height:17px;background:#f8f8f8;"></div>
<div class="a" style="left:119px;top:930px;width:17px;height:17px;box-sizing:border-box;background:#f0f0f0;border:1px solid;border-color:#fff #696969 #696969 #fff;box-shadow:inset -1px -1px 0 #a0a0a0;"></div>
<div class="a" style="left:1273px;top:930px;width:17px;height:17px;box-sizing:border-box;background:#f0f0f0;border:1px solid;border-color:#fff #696969 #696969 #fff;box-shadow:inset -1px -1px 0 #a0a0a0;"></div>
<div class="a" style="left:136px;top:930px;width:424px;height:17px;box-sizing:border-box;background:#f0f0f0;border:1px solid;border-color:#fff #696969 #696969 #fff;box-shadow:inset -1px -1px 0 #a0a0a0;"></div>
<div class="a" style="left:1290px;top:930px;width:17px;height:17px;background:#f0f0f0"></div>
<div class="a" style="left:1307px;top:94px;width:2px;height:856px;background:#fff"></div>
<svg class="a" style="left:0;top:0" width="1320" height="950" viewBox="0 0 1320 950">
<path d="M1294.500 106.500 H1302.500 L1298.500 102.500 Z M1294.500 919.500 H1302.500 L1298.500 923.500 Z M129.500 934 V942 L125.500 938 Z M1279.500 934 V942 L1283.500 938 Z" fill="#000"/></svg>
<div class="a" style="left:95px;top:947px;width:1214px;height:2px;background:#f0f0f0"></div>
<div class="a" style="left:93px;top:949px;width:1216px;height:2px;background:#808080"></div>
<div class="a" style="left:93px;top:951px;width:1216px;height:21px;background:#f8f8f8;"></div>
<svg class="a" style="left:0;top:0" width="200" height="975" viewBox="0 0 200 975">
<path d="M101 949 H161 L156.500 965.500 H106.500 Z" fill="#f0f0f0"/>
<path d="M101 950.500 L106.500 965.500 H156.500 L160.500 950.500" fill="none" stroke="#707070" stroke-width="1.500"/></svg>
<span class="t " style="left:107.9px;top:953.0px;font-size:11px;color:#000;letter-spacing:-0.34px;">Плата 1</span>
<div class="a" style="left:0;top:972px;width:1680px;height:1px;background:#a0a0a0"></div>
<div class="a" style="left:0;top:973px;width:1680px;height:37px;background:#f0f0f0"></div>
<div class="a" style="left:1px;top:973px;width:74px;height:37px;box-sizing:border-box;border:1px solid;border-color:#a0a0a0 #fff #fff #a0a0a0"></div>
<div class="a" style="left:78px;top:973px;width:194px;height:37px;box-sizing:border-box;border:1px solid;border-color:#a0a0a0 #fff #fff #a0a0a0"></div>
<div class="a" style="left:275px;top:973px;width:41px;height:37px;box-sizing:border-box;border:1px solid;border-color:#a0a0a0 #fff #fff #a0a0a0"></div>
<div class="a" style="left:318px;top:973px;width:1362px;height:37px;box-sizing:border-box;border:1px solid;border-color:#a0a0a0 #fff #fff #a0a0a0"></div>
<span class="t " style="left:6.2px;top:979.0px;font-size:11px;color:#000;">X:</span>
<span class="t " style="left:6.2px;top:995.0px;font-size:11px;color:#000;">Y:</span>
<span class="t " style="left:30.0px;top:979.0px;font-size:11px;color:#000;letter-spacing:0.06px;">24,9 мм</span>
<span class="t " style="left:23.0px;top:995.0px;font-size:11px;color:#000;letter-spacing:0.16px;">40,87 мм</span>
<span class="t " style="left:84.6px;top:979.0px;font-size:11px;color:#000;letter-spacing:-0.30px;">видим.</span>
<span class="t " style="left:84.6px;top:995.0px;font-size:11px;color:#000;letter-spacing:-0.02px;">актив.</span>
<div class="a" style="left:124px;top:974px;width:133px;height:18px;background:#000"></div>
<span class="t " style="left:125.3px;top:978.0px;font-size:11.5px;color:#ff0000;font-weight:bold;">M1</span>
<span class="t " style="left:144.7px;top:978.0px;font-size:11.5px;color:#ffffff;font-weight:bold;">K1</span>
<span class="t " style="left:163.7px;top:978.0px;font-size:11.5px;color:#00c000;font-weight:bold;">M2</span>
<span class="t " style="left:183.1px;top:978.0px;font-size:11.5px;color:#c0c0c0;font-weight:bold;">K2</span>
<span class="t " style="left:202.2px;top:978.0px;font-size:11.5px;color:#ff8000;font-weight:bold;">B1</span>
<span class="t " style="left:221.0px;top:978.0px;font-size:11.5px;color:#ffa040;font-weight:bold;">B2</span>
<span class="t " style="left:241.8px;top:978.0px;font-size:11.5px;color:#ffff00;font-weight:bold;">Ф</span>
<svg class="a" style="left:0;top:0" width="320" height="1010" viewBox="0 0 320 1010"><circle cx="133.3" cy="1000" r="5" fill="#fff" stroke="#909090" stroke-width="1.200"/><circle cx="152" cy="1000" r="5" fill="#fff" stroke="#909090" stroke-width="1.200"/><circle cx="171.7" cy="1000" r="5" fill="#fff" stroke="#909090" stroke-width="1.200"/><circle cx="171.7" cy="1000" r="2" fill="#000"/><circle cx="190.4" cy="1000" r="5" fill="#fff" stroke="#909090" stroke-width="1.200"/><circle cx="209.6" cy="1000" r="5" fill="#fff" stroke="#909090" stroke-width="1.200"/><circle cx="228.3" cy="1000" r="5" fill="#fff" stroke="#909090" stroke-width="1.200"/><circle cx="246.7" cy="1000" r="5" fill="#fff" stroke="#909090" stroke-width="1.200"/><rect x="280" y="978" width="28" height="26" fill="#808080"/><rect x="280" y="978" width="28" height="1" fill="#fff"/><rect x="280" y="978" width="1" height="26" fill="#fff"/><rect x="307" y="978" width="1" height="26" fill="#404040"/><rect x="280" y="1003" width="28" height="1" fill="#404040"/><path d="M283.500 984.500 H291 L299 994" fill="none" stroke="#fff" stroke-width="5.500" stroke-linecap="round" stroke-linejoin="round"/><circle cx="299.500" cy="995.500" r="4" fill="#fff" stroke="#fff" stroke-width="2.500"/><path d="M283.500 984.500 H291 L299 994" fill="none" stroke="#000" stroke-width="3" stroke-linecap="round" stroke-linejoin="round"/><circle cx="299.500" cy="995.500" r="3" fill="#fff" stroke="#000" stroke-width="2.400"/></svg>
<span class="t " style="left:262.0px;top:986.0px;font-size:11px;color:#000080;">?</span>
<span class="t " style="left:323.7px;top:978.0px;font-size:11px;color:#000080;letter-spacing:0.02px;">Контроль: Выбор контакта для проверки его соединения с другими.</span>
<div class="a" style="left:1311px;top:76px;width:104px;height:16px;background:#000"></div>
<span class="t " style="left:1314.0px;top:78.0px;font-size:12px;color:#90b0ff;letter-spacing:-0.32px;font-weight:bold;">Свойства</span>
<div class="a" style="left:1399.5px;top:77px;width:15px;height:14px;background:#fff;box-sizing:border-box;border:1px solid #808080"></div><svg class="a" style="left:1399.5px;top:77px" width="15" height="14" viewBox="0 0 15 14"><path d="M4 3.500 L11 10.500 M11 3.500 L4 10.500" stroke="#000" stroke-width="1.600"/></svg>
<div class="a" style="left:1418px;top:76px;width:5px;height:894px;background-image:radial-gradient(circle,#a8a8a8 0.6px,transparent 0.9px);background-size:3px 3px;"></div>
<span class="t " style="left:1313.3px;top:109.5px;font-size:11.5px;color:#000;letter-spacing:0.34px;font-weight:bold;">Плата</span>
<div class="a" style="left:1311px;top:125px;width:105px;height:1px;background:#a0a0a0"></div><div class="a" style="left:1311px;top:126px;width:105px;height:1px;background:#fff"></div>
<span class="t " style="left:1315.7px;top:136.5px;font-size:11px;color:#000;letter-spacing:-0.39px;">Ширина:</span>
<span class="t " style="left:1315.7px;top:177.0px;font-size:11px;color:#000;letter-spacing:-0.19px;">Высота:</span>
<span class="t " style="left:1315.7px;top:218.7px;font-size:11px;color:#000;letter-spacing:-0.10px;">Название:</span>
<div class="a" style="left:1315px;top:151px;width:44px;height:16px;background:#808080"></div><div class="a" style="left:1316px;top:152px;width:43px;height:15px;background:#fff"></div><div class="a" style="left:1316px;top:152px;width:42px;height:14px;background:#000"></div>
<span class="t " style="left:1323.5px;top:153.7px;font-size:11px;color:#ffff00;letter-spacing:-0.19px;">160.00</span>
<div class="a" style="left:1363px;top:154px;width:2px;height:11px;background:#606060;border-radius:1px"></div><div class="a" style="left:1365.500px;top:154px;width:2px;height:11px;background:#909090;border-radius:1px"></div>
<span class="t " style="left:1374.5px;top:153.7px;font-size:11px;color:#000;letter-spacing:-0.06px;">мм</span>
<div class="a" style="left:1315px;top:191px;width:44px;height:16px;background:#808080"></div><div class="a" style="left:1316px;top:192px;width:43px;height:15px;background:#fff"></div><div class="a" style="left:1316px;top:192px;width:42px;height:14px;background:#000"></div>
<span class="t " style="left:1323.5px;top:193.7px;font-size:11px;color:#ffff00;letter-spacing:-0.19px;">100.00</span>
<div class="a" style="left:1363px;top:194px;width:2px;height:11px;background:#606060;border-radius:1px"></div><div class="a" style="left:1365.500px;top:194px;width:2px;height:11px;background:#909090;border-radius:1px"></div>
<span class="t " style="left:1374.5px;top:193.7px;font-size:11px;color:#000;letter-spacing:-0.06px;">мм</span>
<div class="a" style="left:1315px;top:233px;width:87px;height:20px;box-sizing:border-box;background:#fff;border:1px solid;border-color:#808080 #e8e8e8 #e8e8e8 #808080;box-shadow:inset 1px 1px 0 #a0a0a0"></div>
<span class="t " style="left:1318.3px;top:237.8px;font-size:11px;color:#000;letter-spacing:-0.27px;">Плата 1</span>
<div class="a" style="left:1315px;top:267px;width:13px;height:13px;box-sizing:border-box;background:#fff;border:1px solid;border-color:#808080 #e8e8e8 #e8e8e8 #808080;box-shadow:inset 1px 1px 0 #a0a0a0"></div>
<svg class="a" style="left:1315px;top:267px" width="13" height="13" viewBox="0 0 13 13"><path d="M3 6 L5.500 8.500 L10 3.500" fill="none" stroke="#000" stroke-width="1.900"/></svg>
<span class="t " style="left:1333.6px;top:267.5px;font-size:11px;color:#000;letter-spacing:0.01px;">Многослойная</span>
<div class="a" style="left:1424px;top:76px;width:254px;height:16px;background:#000"></div>
<span class="t " style="left:1516.4px;top:78.0px;font-size:12px;color:#ff0000;letter-spacing:-0.20px;font-weight:bold;">Библиотека</span>
<div class="a" style="left:1663px;top:77px;width:15px;height:14px;background:#fff;box-sizing:border-box;border:1px solid #808080"></div><svg class="a" style="left:1663px;top:77px" width="15" height="14" viewBox="0 0 15 14"><path d="M4 3.500 L11 10.500 M11 3.500 L4 10.500" stroke="#000" stroke-width="1.600"/></svg>
<div class="a" style="left:1424px;top:97px;width:254px;height:604px;box-sizing:border-box;background:#fff;border:1px solid;border-color:#808080 #e8e8e8 #e8e8e8 #808080;box-shadow:inset 1px 1px 0 #a0a0a0"></div>
<svg class="a" style="left:0;top:0" width="1680" height="705" viewBox="0 0 1680 705" shape-rendering="crispEdges"><rect x="1477" y="484" width="51" height="15" fill="#f0f0f0"/><rect x="1464" y="103" width="9" height="9" fill="#808080"/><rect x="1465" y="104" width="7" height="7" fill="#fff"/><rect x="1466" y="107" width="5" height="1" fill="#000"/><rect x="1468" y="105" width="1" height="5" fill="#000"/><path d="M1474 107.5 H1478" stroke="#808080" stroke-dasharray="1 1"/><rect x="1464" y="119" width="9" height="9" fill="#808080"/><rect x="1465" y="120" width="7" height="7" fill="#fff"/><rect x="1466" y="123" width="5" height="1" fill="#000"/><rect x="1468" y="121" width="1" height="5" fill="#000"/><path d="M1474 123.5 H1478" stroke="#808080" stroke-dasharray="1 1"/><rect x="1464" y="135" width="9" height="9" fill="#808080"/><rect x="1465" y="136" width="7" height="7" fill="#fff"/><rect x="1466" y="139" width="5" height="1" fill="#000"/><rect x="1468" y="137" width="1" height="5" fill="#000"/><path d="M1474 139.5 H1478" stroke="#808080" stroke-dasharray="1 1"/><rect x="1464" y="151" width="9" height="9" fill="#808080"/><rect x="1465" y="152" width="7" height="7" fill="#fff"/><rect x="1466" y="155" width="5" height="1" fill="#000"/><rect x="1468" y="153" width="1" height="5" fill="#000"/><path d="M1474 155.5 H1478" stroke="#808080" stroke-dasharray="1 1"/><rect x="1464" y="167" width="9" height="9" fill="#808080"/><rect x="1465" y="168" width="7" height="7" fill="#fff"/><rect x="1466" y="171" width="5" height="1" fill="#000"/><rect x="1468" y="169" width="1" height="5" fill="#000"/><path d="M1474 171.5 H1478" stroke="#808080" stroke-dasharray="1 1"/><rect x="1464" y="183" width="9" height="9" fill="#808080"/><rect x="1465" y="184" width="7" height="7" fill="#fff"/><rect x="1466" y="187" width="5" height="1" fill="#000"/><rect x="1468" y="185" width="1" height="5" fill="#000"/><path d="M1474 187.5 H1478" stroke="#808080" stroke-dasharray="1 1"/><rect x="1464" y="199" width="9" height="9" fill="#808080"/><rect x="1465" y="200" width="7" height="7" fill="#fff"/><rect x="1466" y="203" width="5" height="1" fill="#000"/><rect x="1468" y="201" width="1" height="5" fill="#000"/><path d="M1474 203.5 H1478" stroke="#808080" stroke-dasharray="1 1"/><rect x="1464" y="215" width="9" height="9" fill="#808080"/><rect x="1465" y="216" width="7" height="7" fill="#fff"/><rect x="1466" y="219" width="5" height="1" fill="#000"/><rect x="1468" y="217" width="1" height="5" fill="#000"/><path d="M1474 219.5 H1478" stroke="#808080" stroke-dasharray="1 1"/><rect x="1464" y="231" width="9" height="9" fill="#808080"/><rect x="1465" y="232" width="7" height="7" fill="#fff"/><rect x="1466" y="235" width="5" height="1" fill="#000"/><rect x="1468" y="233" width="1" height="5" fill="#000"/><path d="M1474 235.5 H1478" stroke="#808080" stroke-dasharray="1 1"/><rect x="1464" y="247" width="9" height="9" fill="#808080"/><rect x="1465" y="248" width="7" height="7" fill="#fff"/><rect x="1466" y="251" width="5" height="1" fill="#000"/><rect x="1468" y="249" width="1" height="5" fill="#000"/><path d="M1474 251.5 H1478" stroke="#808080" stroke-dasharray="1 1"/><rect x="1464" y="263" width="9" height="9" fill="#808080"/><rect x="1465" y="264" width="7" height="7" fill="#fff"/><rect x="1466" y="267" width="5" height="1" fill="#000"/><rect x="1468" y="265" width="1" height="5" fill="#000"/><path d="M1474 267.5 H1478" stroke="#808080" stroke-dasharray="1 1"/><rect x="1464" y="279" width="9" height="9" fill="#808080"/><rect x="1465" y="280" width="7" height="7" fill="#fff"/><rect x="1466" y="283" width="5" height="1" fill="#000"/><rect x="1468" y="281" width="1" height="5" fill="#000"/><path d="M1474 283.5 H1478" stroke="#808080" stroke-dasharray="1 1"/><rect x="1464" y="295" width="9" height="9" fill="#808080"/><rect x="1465" y="296" width="7" height="7" fill="#fff"/><rect x="1466" y="299" width="5" height="1" fill="#000"/><rect x="1468" y="297" width="1" height="5" fill="#000"/><path d="M1474 299.5 H1478" stroke="#808080" stroke-dasharray="1 1"/><rect x="1464" y="311" width="9" height="9" fill="#808080"/><rect x="1465" y="312" width="7" height="7" fill="#fff"/><rect x="1466" y="315" width="5" height="1" fill="#000"/><rect x="1468" y="313" width="1" height="5" fill="#000"/><path d="M1474 315.5 H1478" stroke="#808080" stroke-dasharray="1 1"/><rect x="1464" y="327" width="9" height="9" fill="#808080"/><rect x="1465" y="328" width="7" height="7" fill="#fff"/><rect x="1466" y="331" width="5" height="1" fill="#000"/><rect x="1468" y="329" width="1" height="5" fill="#000"/><path d="M1474 331.5 H1478" stroke="#808080" stroke-dasharray="1 1"/><rect x="1464" y="343" width="9" height="9" fill="#808080"/><rect x="1465" y="344" width="7" height="7" fill="#fff"/><rect x="1466" y="347" width="5" height="1" fill="#000"/><rect x="1468" y="345" width="1" height="5" fill="#000"/><path d="M1474 347.5 H1478" stroke="#808080" stroke-dasharray="1 1"/><rect x="1464" y="359" width="9" height="9" fill="#808080"/><rect x="1465" y="360" width="7" height="7" fill="#fff"/><rect x="1466" y="363" width="5" height="1" fill="#000"/><rect x="1468" y="361" width="1" height="5" fill="#000"/><path d="M1474 363.5 H1478" stroke="#808080" stroke-dasharray="1 1"/><rect x="1464" y="375" width="9" height="9" fill="#808080"/><rect x="1465" y="376" width="7" height="7" fill="#fff"/><rect x="1466" y="379" width="5" height="1" fill="#000"/><rect x="1468" y="377" width="1" height="5" fill="#000"/><path d="M1474 379.5 H1478" stroke="#808080" stroke-dasharray="1 1"/><rect x="1464" y="391" width="9" height="9" fill="#808080"/><rect x="1465" y="392" width="7" height="7" fill="#fff"/><rect x="1466" y="395" width="5" height="1" fill="#000"/><rect x="1468" y="393" width="1" height="5" fill="#000"/><path d="M1474 395.5 H1478" stroke="#808080" stroke-dasharray="1 1"/><rect x="1464" y="407" width="9" height="9" fill="#808080"/><rect x="1465" y="408" width="7" height="7" fill="#fff"/><rect x="1466" y="411" width="5" height="1" fill="#000"/><rect x="1468" y="409" width="1" height="5" fill="#000"/><path d="M1474 411.5 H1478" stroke="#808080" stroke-dasharray="1 1"/><rect x="1464" y="423" width="9" height="9" fill="#808080"/><rect x="1465" y="424" width="7" height="7" fill="#fff"/><rect x="1466" y="427" width="5" height="1" fill="#000"/><rect x="1468" y="425" width="1" height="5" fill="#000"/><path d="M1474 427.5 H1478" stroke="#808080" stroke-dasharray="1 1"/><rect x="1464" y="439" width="9" height="9" fill="#808080"/><rect x="1465" y="440" width="7" height="7" fill="#fff"/><rect x="1466" y="443" width="5" height="1" fill="#000"/><rect x="1468" y="441" width="1" height="5" fill="#000"/><path d="M1474 443.5 H1478" stroke="#808080" stroke-dasharray="1 1"/><rect x="1464" y="455" width="9" height="9" fill="#808080"/><rect x="1465" y="456" width="7" height="7" fill="#fff"/><rect x="1466" y="459" width="5" height="1" fill="#000"/><rect x="1468" y="457" width="1" height="5" fill="#000"/><path d="M1474 459.5 H1478" stroke="#808080" stroke-dasharray="1 1"/><rect x="1464" y="471" width="9" height="9" fill="#808080"/><rect x="1465" y="472" width="7" height="7" fill="#fff"/><rect x="1466" y="475" width="5" height="1" fill="#000"/><rect x="1468" y="473" width="1" height="5" fill="#000"/><path d="M1474 475.5 H1478" stroke="#808080" stroke-dasharray="1 1"/><rect x="1464" y="487" width="9" height="9" fill="#808080"/><rect x="1465" y="488" width="7" height="7" fill="#fff"/><rect x="1466" y="491" width="5" height="1" fill="#000"/><rect x="1468" y="489" width="1" height="5" fill="#000"/><path d="M1474 491.5 H1478" stroke="#808080" stroke-dasharray="1 1"/><rect x="1464" y="503" width="9" height="9" fill="#808080"/><rect x="1465" y="504" width="7" height="7" fill="#fff"/><rect x="1466" y="507" width="5" height="1" fill="#000"/><rect x="1468" y="505" width="1" height="5" fill="#000"/><path d="M1474 507.5 H1478" stroke="#808080" stroke-dasharray="1 1"/><rect x="1464" y="519" width="9" height="9" fill="#808080"/><rect x="1465" y="520" width="7" height="7" fill="#fff"/><rect x="1466" y="523" width="5" height="1" fill="#000"/><rect x="1468" y="521" width="1" height="5" fill="#000"/><path d="M1474 523.5 H1478" stroke="#808080" stroke-dasharray="1 1"/><rect x="1464" y="535" width="9" height="9" fill="#808080"/><rect x="1465" y="536" width="7" height="7" fill="#fff"/><rect x="1466" y="539" width="5" height="1" fill="#000"/><rect x="1468" y="537" width="1" height="5" fill="#000"/><path d="M1474 539.5 H1478" stroke="#808080" stroke-dasharray="1 1"/><rect x="1464" y="551" width="9" height="9" fill="#808080"/><rect x="1465" y="552" width="7" height="7" fill="#fff"/><rect x="1466" y="555" width="5" height="1" fill="#000"/><rect x="1468" y="553" width="1" height="5" fill="#000"/><path d="M1474 555.5 H1478" stroke="#808080" stroke-dasharray="1 1"/><rect x="1464" y="567" width="9" height="9" fill="#808080"/><rect x="1465" y="568" width="7" height="7" fill="#fff"/><rect x="1466" y="571" width="5" height="1" fill="#000"/><rect x="1468" y="569" width="1" height="5" fill="#000"/><path d="M1474 571.5 H1478" stroke="#808080" stroke-dasharray="1 1"/><rect x="1464" y="583" width="9" height="9" fill="#808080"/><rect x="1465" y="584" width="7" height="7" fill="#fff"/><rect x="1466" y="587" width="5" height="1" fill="#000"/><rect x="1468" y="585" width="1" height="5" fill="#000"/><path d="M1474 587.5 H1478" stroke="#808080" stroke-dasharray="1 1"/><rect x="1464" y="599" width="9" height="9" fill="#808080"/><rect x="1465" y="600" width="7" height="7" fill="#fff"/><rect x="1466" y="603" width="5" height="1" fill="#000"/><rect x="1468" y="601" width="1" height="5" fill="#000"/><path d="M1474 603.5 H1478" stroke="#808080" stroke-dasharray="1 1"/><rect x="1464" y="615" width="9" height="9" fill="#808080"/><rect x="1465" y="616" width="7" height="7" fill="#fff"/><rect x="1466" y="619" width="5" height="1" fill="#000"/><rect x="1468" y="617" width="1" height="5" fill="#000"/><path d="M1474 619.5 H1478" stroke="#808080" stroke-dasharray="1 1"/><rect x="1464" y="631" width="9" height="9" fill="#808080"/><rect x="1465" y="632" width="7" height="7" fill="#fff"/><rect x="1466" y="635" width="5" height="1" fill="#000"/><rect x="1468" y="633" width="1" height="5" fill="#000"/><path d="M1474 635.5 H1478" stroke="#808080" stroke-dasharray="1 1"/><rect x="1464" y="647" width="9" height="9" fill="#808080"/><rect x="1465" y="648" width="7" height="7" fill="#fff"/><rect x="1466" y="651" width="5" height="1" fill="#000"/><rect x="1468" y="649" width="1" height="5" fill="#000"/><path d="M1474 651.5 H1478" stroke="#808080" stroke-dasharray="1 1"/><rect x="1464" y="663" width="9" height="9" fill="#808080"/><rect x="1465" y="664" width="7" height="7" fill="#fff"/><rect x="1466" y="667" width="5" height="1" fill="#000"/><rect x="1468" y="665" width="1" height="5" fill="#000"/><path d="M1474 667.5 H1478" stroke="#808080" stroke-dasharray="1 1"/><path d="M1468.500 98 V663" stroke="#808080" stroke-dasharray="1 1"/></svg>
<span class="t " style="left:1479.5px;top:101.6px;font-size:11px;color:#000;letter-spacing:-0.11px;">IGBT модули</span>
<span class="t " style="left:1479.5px;top:117.6px;font-size:11px;color:#000;letter-spacing:-0.05px;">R и C триммеры</span>
<span class="t " style="left:1479.5px;top:133.6px;font-size:11px;color:#000;letter-spacing:-0.48px;">SMD</span>
<span class="t " style="left:1479.5px;top:149.6px;font-size:11px;color:#000;letter-spacing:0.03px;">Батареи и аккумуляторы</span>
<span class="t " style="left:1479.5px;top:165.6px;font-size:11px;color:#000;letter-spacing:-0.01px;">Блоки питания</span>
<span class="t " style="left:1479.5px;top:181.6px;font-size:11px;color:#000;letter-spacing:-0.03px;">Валкодеры</span>
<span class="t " style="left:1479.5px;top:197.6px;font-size:11px;color:#000;letter-spacing:0.02px;">Варисторы и варикапы</span>
<span class="t " style="left:1479.5px;top:213.6px;font-size:11px;color:#000;letter-spacing:0.14px;">Диодные мосты</span>
<span class="t " style="left:1479.5px;top:229.6px;font-size:11px;color:#000;letter-spacing:0.24px;">Диоды</span>
<span class="t " style="left:1479.5px;top:245.6px;font-size:11px;color:#000;letter-spacing:0.02px;">Звуковые излучатели</span>
<span class="t " style="left:1479.5px;top:261.6px;font-size:11px;color:#000;letter-spacing:0.02px;">Индуктивности</span>
<span class="t " style="left:1479.5px;top:277.6px;font-size:11px;color:#000;letter-spacing:0.07px;">Кварцы</span>
<span class="t " style="left:1479.5px;top:293.6px;font-size:11px;color:#000;">Кириллица</span>
<span class="t " style="left:1479.5px;top:309.6px;font-size:11px;color:#000;">Кнопки и переключатели</span>
<span class="t " style="left:1479.5px;top:325.6px;font-size:11px;color:#000;">Конденсаторы</span>
<span class="t " style="left:1479.5px;top:341.6px;font-size:11px;color:#000;">Лампы</span>
<span class="t " style="left:1479.5px;top:357.6px;font-size:11px;color:#000;">Микросхемы</span>
<span class="t " style="left:1479.5px;top:373.6px;font-size:11px;color:#000;">Оптика</span>
<span class="t " style="left:1479.5px;top:389.6px;font-size:11px;color:#000;">От разработчиков</span>
<span class="t " style="left:1479.5px;top:405.6px;font-size:11px;color:#000;">Полевые транзисторы</span>
<span class="t " style="left:1479.5px;top:421.6px;font-size:11px;color:#000;">Предохранители</span>
<span class="t " style="left:1479.5px;top:437.6px;font-size:11px;color:#000;">Простые платы</span>
<span class="t " style="left:1479.5px;top:453.6px;font-size:11px;color:#000;">Радиаторы</span>
<span class="t " style="left:1479.5px;top:469.6px;font-size:11px;color:#000;">Разное</span>
<span class="t " style="left:1479.5px;top:485.6px;font-size:11px;color:#000;">Разъёмы</span>
<span class="t " style="left:1479.5px;top:501.6px;font-size:11px;color:#000;">Резисторы</span>
<span class="t " style="left:1479.5px;top:517.6px;font-size:11px;color:#000;">Реле</span>
<span class="t " style="left:1479.5px;top:533.6px;font-size:11px;color:#000;">Светодиоды, знаковые индикаторы</span>
<span class="t " style="left:1479.5px;top:549.6px;font-size:11px;color:#000;">Сердечники</span>
<span class="t " style="left:1479.5px;top:565.6px;font-size:11px;color:#000;">Сетка 1.27</span>
<span class="t " style="left:1479.5px;top:581.6px;font-size:11px;color:#000;">Стабилитроны</span>
<span class="t " style="left:1479.5px;top:597.6px;font-size:11px;color:#000;">СХЕМЫ. УСЛОВНЫЕ ОБОЗНАЧЕН</span>
<span class="t " style="left:1479.5px;top:613.6px;font-size:11px;color:#000;">Тиристоры, симисторы</span>
<span class="t " style="left:1479.5px;top:629.6px;font-size:11px;color:#000;">Транзисторы</span>
<span class="t " style="left:1479.5px;top:645.6px;font-size:11px;color:#000;">Трансформаторы</span>
<span class="t " style="left:1479.5px;top:661.6px;font-size:11px;color:#000;">Усилители</span>
<div class="a" style="left:1660px;top:99px;width:17px;height:586px;background:#f0f0f0"></div>
<div class="a" style="left:1660px;top:159px;width:15px;height:507px;box-sizing:border-box;border:1px solid #979797;border-radius:2px;background:linear-gradient(90deg,#f4f4f4 0,#e6e6e6 45%,#d2d2d2 55%,#c8c8c8 100%)"></div>
<div class="a" style="left:1426px;top:685px;width:234px;height:15px;background:#f0f0f0"></div>
<div class="a" style="left:1660px;top:685px;width:17px;height:15px;background:#f0f0f0"></div>
<div class="a" style="left:1444px;top:686px;width:183px;height:14px;box-sizing:border-box;border:1px solid #979797;border-radius:2px;background:linear-gradient(#f4f4f4 0,#e6e6e6 45%,#d2d2d2 55%,#c8c8c8 100%)"></div>
<svg class="a" style="left:0;top:0" width="1680" height="735" viewBox="0 0 1680 735">
<path d="M1663.500 110 L1667.500 106 L1671.500 110 Z M1663.500 673.500 L1667.500 677.500 L1671.500 673.500 Z M1436.500 689.500 V696.500 L1433 693 Z M1648.500 689.500 V696.500 L1652 693 Z" fill="#606060"/>
<path d="M1532.500 690 V696 M1534.500 690 V696 M1536.500 690 V696 M1664 409.500 H1671 M1664 411.500 H1671 M1664 413.500 H1671" stroke="#606060"/>
<!-- save icon -->
<g transform="translate(1429,708.500)"><rect x="0.500" y="0.500" width="14" height="14" fill="#0000d0" stroke="#000"/><rect x="3" y="1" width="9" height="6" fill="#f0f0f0"/><rect x="3" y="9" width="9" height="6" fill="#000"/><rect x="9" y="10" width="2" height="4" fill="#f0f0f0"/></g>
<g transform="translate(1451,707.500)"><path d="M3.500 5.500 H12.500 L11.500 16.500 H4.500 Z" fill="#909090" stroke="#000"/><path d="M2 4 H14" stroke="#000" stroke-width="2"/><path d="M6 2.500 H10" stroke="#000" stroke-width="2"/><path d="M6 6 V15 M8 6 V15 M10 6 V15" stroke="#000"/></g>
<circle cx="1619" cy="716" r="7" fill="#000"/><circle cx="1619" cy="716" r="2.300" fill="#ff0000"/>
<path d="M1636 710 Q1640 711 1640 716 V723" fill="none" stroke="#909090" stroke-width="2"/><path d="M1649 710 Q1645 711 1645 716 V723" fill="none" stroke="#000" stroke-width="2"/><path d="M1642.500 708 V724" stroke="#0000ff" stroke-dasharray="1 1"/>
<path d="M1667 711 Q1671 709 1672.500 713 M1668 722 Q1664 724 1662.500 720" fill="none" stroke="#000" stroke-width="1.300"/><path d="M1673.500 710 v5 h-5z M1661.500 723 v-5 h5z" fill="#000"/>
<text x="1660.500" y="716" font-size="10" font-weight="bold" fill="#0000e0">1</text><text x="1669" y="724.500" font-size="10" font-weight="bold" fill="#008000">2</text>
</svg>
<div class="a" style="left:1424px;top:730px;width:256px;height:2px;background-image:radial-gradient(circle,#a8a8a8 0.6px,transparent 0.9px);background-size:3px 3px;"></div>
<div class="a" style="left:1424px;top:734px;width:256px;height:31px;background:#fff;border-left:1px solid #808080;border-top:1px solid #808080;box-sizing:border-box"></div>
<div class="a" style="left:1425px;top:765px;width:253px;height:202px;background:#000"></div>
<svg class="a" style="left:0;top:0" width="1680" height="1010" viewBox="0 0 1680 1010" shape-rendering="crispEdges"><polygon points="1448.2,849.8 1467.0,849.8 1476.5,859.3 1476.5,878.1 1467.0,887.6 1448.2,887.6 1438.7,878.1 1438.7,859.3" fill="none" stroke="#fff" stroke-width="2.600"/><circle cx="1457.6" cy="868.7" r="14.3" fill="#00bc00"/><circle cx="1457.6" cy="868.7" r="5.3" fill="#000"/><polygon points="1486.1,849.8 1504.9,849.8 1514.4,859.3 1514.4,878.1 1504.9,887.6 1486.1,887.6 1476.6,878.1 1476.6,859.3" fill="none" stroke="#fff" stroke-width="2.600"/><circle cx="1495.5" cy="868.7" r="14.3" fill="#00bc00"/><circle cx="1495.5" cy="868.7" r="5.3" fill="#000"/><polygon points="1524.0,849.8 1542.8,849.8 1552.3,859.3 1552.3,878.1 1542.8,887.6 1524.0,887.6 1514.5,878.1 1514.5,859.3" fill="none" stroke="#fff" stroke-width="2.600"/><circle cx="1533.4" cy="868.7" r="14.3" fill="#00bc00"/><circle cx="1533.4" cy="868.7" r="5.3" fill="#000"/><polygon points="1561.9,849.8 1580.7,849.8 1590.2,859.3 1590.2,878.1 1580.7,887.6 1561.9,887.6 1552.4,878.1 1552.4,859.3" fill="none" stroke="#fff" stroke-width="2.600"/><circle cx="1571.3" cy="868.7" r="14.3" fill="#00bc00"/><circle cx="1571.3" cy="868.7" r="5.3" fill="#000"/><polygon points="1599.8,849.8 1618.6,849.8 1628.1,859.3 1628.1,878.1 1618.6,887.6 1599.8,887.6 1590.3,878.1 1590.3,859.3" fill="none" stroke="#fff" stroke-width="2.600"/><circle cx="1609.2" cy="868.7" r="14.3" fill="#00bc00"/><circle cx="1609.2" cy="868.7" r="5.3" fill="#000"/><polygon points="1637.7,849.8 1656.5,849.8 1666.0,859.3 1666.0,878.1 1656.5,887.6 1637.7,887.6 1628.2,878.1 1628.2,859.3" fill="none" stroke="#fff" stroke-width="2.600"/><circle cx="1647.1" cy="868.7" r="14.3" fill="#00bc00"/><circle cx="1647.1" cy="868.7" r="5.3" fill="#000"/></svg>
<span class="t " style="left:1553.8px;top:953.0px;font-size:11px;color:#c0c0c0;letter-spacing:0.01px;">Нажать и перетянуть</span>
<div class="a" style="left:1311px;top:972px;width:369px;height:1px;background:#a0a0a0"></div>
</div>
</body></html>
